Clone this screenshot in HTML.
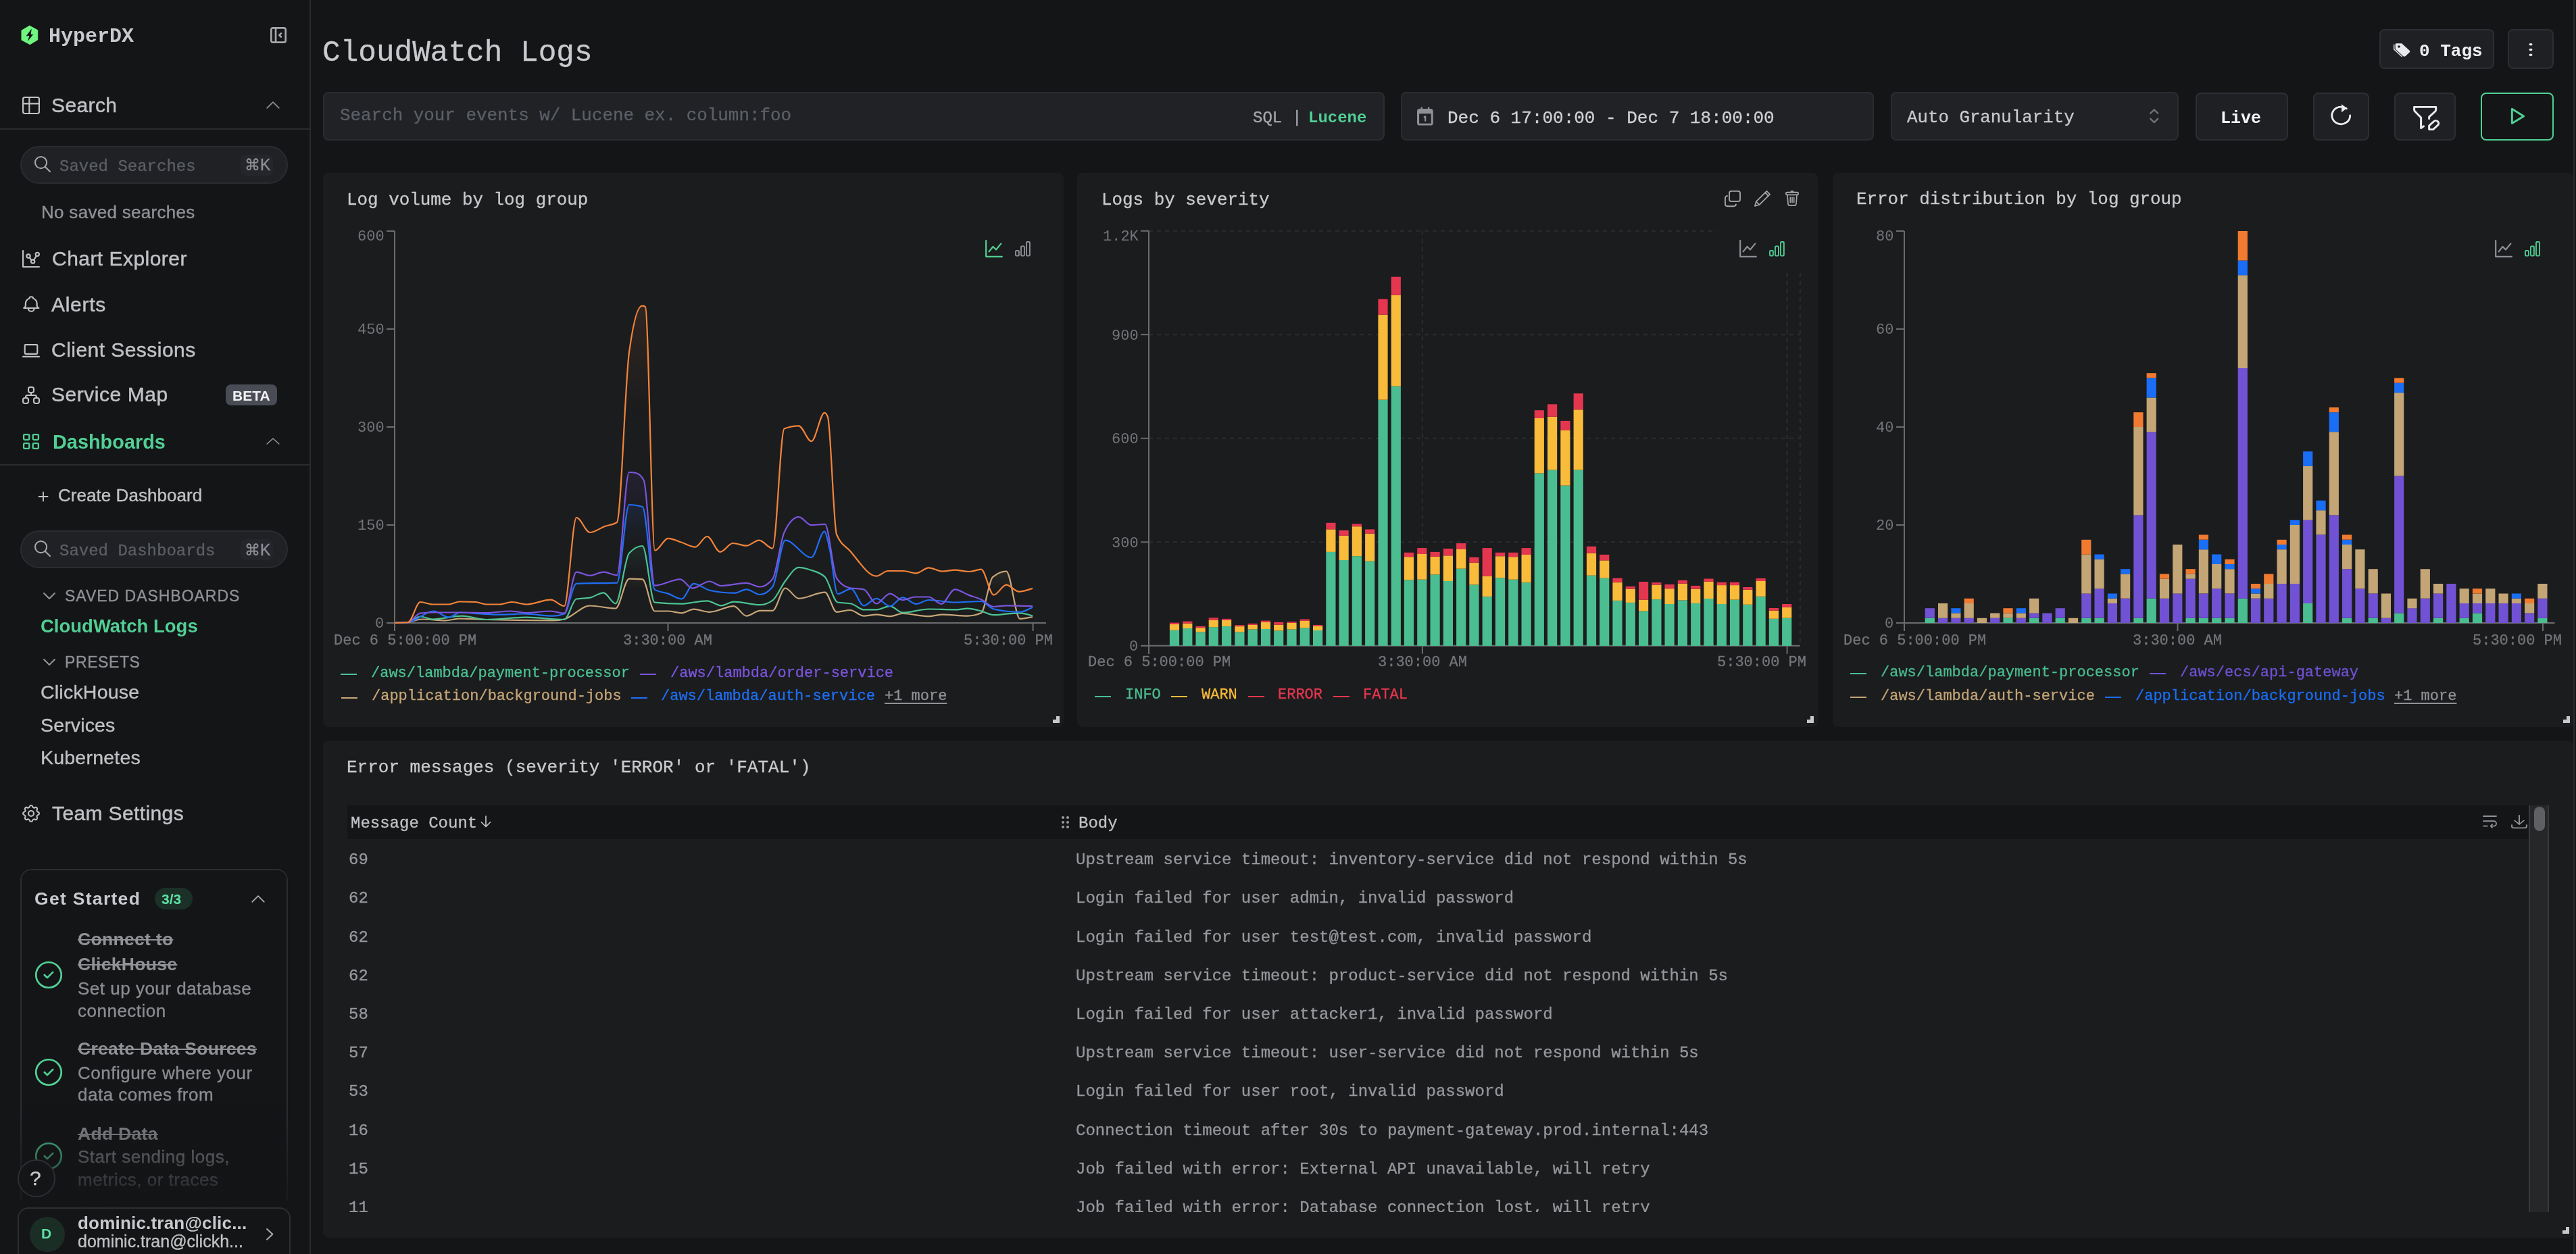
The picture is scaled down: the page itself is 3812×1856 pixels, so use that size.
<!DOCTYPE html>
<html><head><meta charset="utf-8"><style>
html,body{margin:0;padding:0;}
body{width:3812px;height:1856px;overflow:hidden;position:relative;background:#141517;}
.t{position:absolute;white-space:pre;will-change:transform;}
.i{position:absolute;overflow:visible;}
.b{position:absolute;}
@media (max-width: 2600px) { body{zoom:0.5;} }
</style></head><body>
<div class="b" style="left:458.0px;top:0.0px;width:2.0px;height:1856.0px;background:#2a2b2f;border-radius:0px;"></div>
<svg class="i" style="left:30px;top:36px;width:28px;height:32px" viewBox="30 36 28 32"><path d="M43.7,37.9 L55.9,44.6 L55.9,58.9 L44.4,65.9 L31.8,59.3 L31.8,45.1 Z" fill="#70f580" stroke="#70f580" stroke-width="0.6" stroke-linejoin="round"/><path d="M46.8,42.5 L38.6,53.6 L43.4,53.1 L41.0,61.2 L49.1,50.9 L45.6,50.8 Z" fill="#141517"/></svg>
<div class="t" style="left:72.2px;top:39.2px;font-size:30px;line-height:30px;font-family:'Liberation Mono', monospace;color:#c9cacd;font-weight:700;">HyperDX</div>
<svg class="i" style="left:400.0px;top:40.0px;width:24.0px;height:24.0px;color:#a6a7ab;" viewBox="3 3 18 18" preserveAspectRatio="none" fill="none" stroke="currentColor" stroke-width="2" stroke-linecap="round" stroke-linejoin="round"><rect x="4" y="4" width="16" height="16" rx="2"/><path d="M9 4v16"/><path d="M15 10l-2 2 2 2"/></svg>
<svg class="i" style="left:33.0px;top:143.0px;width:26.0px;height:26.0px;color:#c1c2c5;" viewBox="2.2 2.2 19.6 19.6" preserveAspectRatio="none" fill="none" stroke="currentColor" stroke-width="1.6" stroke-linecap="round" stroke-linejoin="round"><rect x="3" y="3" width="18" height="18" rx="2"/><path d="M3 10h18"/><path d="M10 3v18"/></svg>
<div class="t" style="left:75.9px;top:140.5px;font-size:30px;line-height:30px;font-family:'Liberation Sans', sans-serif;color:#c1c2c5;font-weight:400;letter-spacing:0.4px;-webkit-text-stroke:0.45px #c1c2c5">Search</div>
<svg class="i" style="left:394.0px;top:150.0px;width:20.0px;height:11.0px;color:#909296;" viewBox="5.2 8.2 13.6 7.6" preserveAspectRatio="none" fill="none" stroke="currentColor" stroke-width="1.1" stroke-linecap="round" stroke-linejoin="round"><path d="M6 15l6-6 6 6"/></svg>
<div class="b" style="left:0.0px;top:190.0px;width:458.0px;height:2.0px;background:#2a2b2f;border-radius:0px;"></div>
<div class="b" style="left:30.0px;top:216.0px;width:396.0px;height:56.0px;background:#202125;border:2px solid #2a2c31;box-sizing:border-box;border-radius:28px;"></div>
<svg class="i" style="left:51.0px;top:231.0px;width:24.0px;height:24.0px;color:#a6a7ab;" viewBox="2.2 2.2 19.6 19.6" preserveAspectRatio="none" fill="none" stroke="currentColor" stroke-width="1.7" stroke-linecap="round" stroke-linejoin="round"><circle cx="10" cy="10" r="7"/><path d="M21 21l-6-6"/></svg>
<div class="t" style="left:87.6px;top:234.8px;font-size:24px;line-height:24px;font-family:'Liberation Mono', monospace;color:#5c5f66;font-weight:400;;-webkit-text-stroke:0.3px #5c5f66">Saved Searches</div>
<div class="b" style="left:356.0px;top:229.0px;width:48.0px;height:31.0px;background:#25262b;border-radius:8px;"></div>
<div class="t" style="left:362.4px;top:233.4px;font-size:23px;line-height:23px;font-family:'Liberation Sans', sans-serif;color:#8e9096;font-weight:400;;-webkit-text-stroke:0.35px #8e9096">&#8984;K</div>
<div class="t" style="left:60.7px;top:300.9px;font-size:26px;line-height:26px;font-family:'Liberation Sans', sans-serif;color:#909296;font-weight:400;letter-spacing:0.3px;-webkit-text-stroke:0.35px #909296">No saved searches</div>
<svg class="i" style="left:33.0px;top:370.0px;width:26.0px;height:26.0px;color:#c1c2c5;" viewBox="2.2 2.2 19.6 19.6" preserveAspectRatio="none" fill="none" stroke="currentColor" stroke-width="1.6" stroke-linecap="round" stroke-linejoin="round"><path d="M3 3v18h18"/><circle cx="9" cy="9" r="2"/><circle cx="19" cy="7" r="2"/><circle cx="14" cy="15" r="2"/><path d="M10.16 10.62l2.34 2.88"/><path d="M15.088 13.328l2.837-4.586"/></svg>
<div class="t" style="left:76.5px;top:367.5px;font-size:30px;line-height:30px;font-family:'Liberation Sans', sans-serif;color:#c1c2c5;font-weight:400;letter-spacing:0.46px;-webkit-text-stroke:0.45px #c1c2c5">Chart Explorer</div>
<svg class="i" style="left:33.5px;top:437.0px;width:24.5px;height:26.0px;color:#c1c2c5;" viewBox="3.2 1.2 17.6 21.6" preserveAspectRatio="none" fill="none" stroke="currentColor" stroke-width="1.6" stroke-linecap="round" stroke-linejoin="round"><path d="M10 5a2 2 0 1 1 4 0a7 7 0 0 1 4 6v3a4 4 0 0 0 2 3h-16a4 4 0 0 0 2-3v-3a7 7 0 0 1 4-6"/><path d="M9 17v1a3 3 0 0 0 6 0v-1"/></svg>
<div class="t" style="left:75.9px;top:435.5px;font-size:30px;line-height:30px;font-family:'Liberation Sans', sans-serif;color:#c1c2c5;font-weight:400;letter-spacing:0.7px;-webkit-text-stroke:0.45px #c1c2c5">Alerts</div>
<svg class="i" style="left:33.0px;top:509.0px;width:26.0px;height:20.0px;color:#c1c2c5;" viewBox="2.2 5.2 19.6 14.6" preserveAspectRatio="none" fill="none" stroke="currentColor" stroke-width="1.6" stroke-linecap="round" stroke-linejoin="round"><path d="M3 19h18"/><rect x="5" y="6" width="14" height="10" rx="1"/></svg>
<div class="t" style="left:75.9px;top:502.5px;font-size:30px;line-height:30px;font-family:'Liberation Sans', sans-serif;color:#c1c2c5;font-weight:400;letter-spacing:0.46px;-webkit-text-stroke:0.45px #c1c2c5">Client Sessions</div>
<svg class="i" style="left:33.0px;top:572.0px;width:26.0px;height:26.0px;color:#c1c2c5;" viewBox="2.2 2.2 19.6 19.6" preserveAspectRatio="none" fill="none" stroke="currentColor" stroke-width="1.6" stroke-linecap="round" stroke-linejoin="round"><rect x="3" y="15" width="6" height="6" rx="2"/><rect x="15" y="15" width="6" height="6" rx="2"/><rect x="9" y="3" width="6" height="6" rx="2"/><path d="M6 15v-1a2 2 0 0 1 2-2h8a2 2 0 0 1 2 2v1"/><path d="M12 9v3"/></svg>
<div class="t" style="left:75.9px;top:568.5px;font-size:30px;line-height:30px;font-family:'Liberation Sans', sans-serif;color:#c1c2c5;font-weight:400;letter-spacing:0.54px;-webkit-text-stroke:0.45px #c1c2c5">Service Map</div>
<div class="b" style="left:334.0px;top:569.0px;width:76.0px;height:31.0px;background:#4a4c55;border-radius:8px;"></div>
<div class="t" style="left:343.5px;top:575.1px;font-size:21px;line-height:21px;font-family:'Liberation Sans', sans-serif;color:#f1f1f3;font-weight:700;">BETA</div>
<svg class="i" style="left:34.0px;top:642.0px;width:24.0px;height:23.0px;color:#51cf94;" viewBox="3.2 3.2 17.6 17.6" preserveAspectRatio="none" fill="none" stroke="currentColor" stroke-width="1.7" stroke-linecap="round" stroke-linejoin="round"><rect x="4" y="4" width="6" height="6" rx="1"/><rect x="14" y="4" width="6" height="6" rx="1"/><rect x="4" y="14" width="6" height="6" rx="1"/><rect x="14" y="14" width="6" height="6" rx="1"/></svg>
<div class="t" style="left:77.5px;top:639.7px;font-size:28.8px;line-height:28.8px;font-family:'Liberation Sans', sans-serif;color:#51cf94;font-weight:700;letter-spacing:0.05px">Dashboards</div>
<svg class="i" style="left:394.0px;top:648.0px;width:20.0px;height:10.0px;color:#909296;" viewBox="5.2 8.2 13.6 7.6" preserveAspectRatio="none" fill="none" stroke="currentColor" stroke-width="1.1" stroke-linecap="round" stroke-linejoin="round"><path d="M6 15l6-6 6 6"/></svg>
<div class="b" style="left:0.0px;top:687.0px;width:458.0px;height:2.0px;background:#2a2b2f;border-radius:0px;"></div>
<svg class="i" style="left:57.0px;top:728.0px;width:14.0px;height:14.0px;color:#c1c2c5;" viewBox="4.5 4.5 15 15" preserveAspectRatio="none" fill="none" stroke="currentColor" stroke-width="2" stroke-linecap="round" stroke-linejoin="round"><path d="M12 5v14M5 12h14"/></svg>
<div class="t" style="left:86.2px;top:719.9px;font-size:26px;line-height:26px;font-family:'Liberation Sans', sans-serif;color:#c1c2c5;font-weight:400;letter-spacing:0.05px;-webkit-text-stroke:0.35px #c1c2c5">Create Dashboard</div>
<div class="b" style="left:30.0px;top:785.0px;width:396.0px;height:56.0px;background:#202125;border:2px solid #2a2c31;box-sizing:border-box;border-radius:28px;"></div>
<svg class="i" style="left:51.0px;top:800.0px;width:24.0px;height:24.0px;color:#a6a7ab;" viewBox="2.2 2.2 19.6 19.6" preserveAspectRatio="none" fill="none" stroke="currentColor" stroke-width="1.7" stroke-linecap="round" stroke-linejoin="round"><circle cx="10" cy="10" r="7"/><path d="M21 21l-6-6"/></svg>
<div class="t" style="left:87.6px;top:803.8px;font-size:24px;line-height:24px;font-family:'Liberation Mono', monospace;color:#5c5f66;font-weight:400;;-webkit-text-stroke:0.3px #5c5f66">Saved Dashboards</div>
<div class="b" style="left:356.0px;top:798.0px;width:48.0px;height:31.0px;background:#25262b;border-radius:8px;"></div>
<div class="t" style="left:362.4px;top:802.5px;font-size:23px;line-height:23px;font-family:'Liberation Sans', sans-serif;color:#8e9096;font-weight:400;;-webkit-text-stroke:0.35px #8e9096">&#8984;K</div>
<svg class="i" style="left:64.0px;top:877.0px;width:18.0px;height:10.0px;color:#909296;" viewBox="5.2 8.2 13.6 7.6" preserveAspectRatio="none" fill="none" stroke="currentColor" stroke-width="1.6" stroke-linecap="round" stroke-linejoin="round"><path d="M6 9l6 6 6-6"/></svg>
<div class="t" style="left:96.4px;top:870.5px;font-size:23px;line-height:23px;font-family:'Liberation Sans', sans-serif;color:#909296;font-weight:400;letter-spacing:0.98px;-webkit-text-stroke:0.35px #909296">SAVED DASHBOARDS</div>
<div class="t" style="left:60.1px;top:912.6px;font-size:27.5px;line-height:27.5px;font-family:'Liberation Sans', sans-serif;color:#51cf94;font-weight:700;">CloudWatch Logs</div>
<svg class="i" style="left:64.0px;top:975.0px;width:18.0px;height:10.0px;color:#909296;" viewBox="5.2 8.2 13.6 7.6" preserveAspectRatio="none" fill="none" stroke="currentColor" stroke-width="1.6" stroke-linecap="round" stroke-linejoin="round"><path d="M6 9l6 6 6-6"/></svg>
<div class="t" style="left:96.4px;top:968.5px;font-size:23px;line-height:23px;font-family:'Liberation Sans', sans-serif;color:#909296;font-weight:400;letter-spacing:0.6px;-webkit-text-stroke:0.35px #909296">PRESETS</div>
<div class="t" style="left:60.0px;top:1010.3px;font-size:28.5px;line-height:28.5px;font-family:'Liberation Sans', sans-serif;color:#c1c2c5;font-weight:400;letter-spacing:0.22px;-webkit-text-stroke:0.35px #c1c2c5">ClickHouse</div>
<div class="t" style="left:60.0px;top:1058.8px;font-size:28.5px;line-height:28.5px;font-family:'Liberation Sans', sans-serif;color:#c1c2c5;font-weight:400;letter-spacing:0.15px;-webkit-text-stroke:0.35px #c1c2c5">Services</div>
<div class="t" style="left:60.0px;top:1107.2px;font-size:28.5px;line-height:28.5px;font-family:'Liberation Sans', sans-serif;color:#c1c2c5;font-weight:400;letter-spacing:0.22px;-webkit-text-stroke:0.35px #c1c2c5">Kubernetes</div>
<svg class="i" style="left:33.0px;top:1191.0px;width:26.0px;height:26.0px;color:#c1c2c5;" viewBox="2.2 2.2 19.6 19.6" preserveAspectRatio="none" fill="none" stroke="currentColor" stroke-width="1.6" stroke-linecap="round" stroke-linejoin="round"><path d="M10.325 4.317c.426-1.756 2.924-1.756 3.35 0a1.724 1.724 0 0 0 2.573 1.066c1.543-.94 3.31.826 2.37 2.37a1.724 1.724 0 0 0 1.065 2.572c1.756.426 1.756 2.924 0 3.35a1.724 1.724 0 0 0-1.066 2.573c.94 1.543-.826 3.31-2.37 2.37a1.724 1.724 0 0 0-2.572 1.065c-.426 1.756-2.924 1.756-3.35 0a1.724 1.724 0 0 0-2.573-1.066c-1.543.94-3.31-.826-2.37-2.37a1.724 1.724 0 0 0-1.065-2.572c-1.756-.426-1.756-2.924 0-3.35a1.724 1.724 0 0 0 1.066-2.573c-.94-1.543.826-3.31 2.37-2.37c1 .608 2.296.07 2.572-1.065z"/><circle cx="12" cy="12" r="3"/></svg>
<div class="t" style="left:76.5px;top:1188.9px;font-size:30px;line-height:30px;font-family:'Liberation Sans', sans-serif;color:#c1c2c5;font-weight:400;letter-spacing:0.38px;-webkit-text-stroke:0.45px #c1c2c5">Team Settings</div>
<div class="b" style="left:30px;top:1286px;width:396px;height:492px;border:2px solid #2a2c31;border-bottom:none;border-radius:16px 16px 0 0;box-sizing:border-box;-webkit-mask-image:linear-gradient(to bottom,#000 0%,#000 75%,rgba(0,0,0,0.25) 100%)"></div>
<div class="t" style="left:50.7px;top:1316.5px;font-size:26.5px;line-height:26.5px;font-family:'Liberation Sans', sans-serif;color:#c9cacd;font-weight:700;letter-spacing:1.3px">Get Started</div>
<div class="b" style="left:228.5px;top:1314.0px;width:56.2px;height:32.0px;background:#1b3128;border-radius:16px;"></div>
<div class="t" style="left:238.5px;top:1320.2px;font-size:21px;line-height:21px;font-family:'Liberation Sans', sans-serif;color:#5ee0a4;font-weight:700;">3/3</div>
<svg class="i" style="left:372.0px;top:1325.0px;width:20.0px;height:11.0px;color:#b0b1b5;" viewBox="5.2 8.2 13.6 7.6" preserveAspectRatio="none" fill="none" stroke="currentColor" stroke-width="1.1" stroke-linecap="round" stroke-linejoin="round"><path d="M6 15l6-6 6 6"/></svg>
<svg class="i" style="left:52.0px;top:1423.0px;width:40.0px;height:40.0px;color:#52d197;" viewBox="2.4 2.4 19.2 19.2" preserveAspectRatio="none" fill="none" stroke="currentColor" stroke-width="1.3" stroke-linecap="round" stroke-linejoin="round"><circle cx="12" cy="12" r="9"/><path d="M9 12l2 2 4-4"/></svg>
<div class="t" style="left:114.6px;top:1377.1px;font-size:26.5px;line-height:26.5px;font-family:'Liberation Sans', sans-serif;color:#909296;font-weight:700;text-decoration:line-through;text-decoration-thickness:2px;letter-spacing:0.3px">Connect to</div>
<div class="t" style="left:114.6px;top:1414.2px;font-size:26.5px;line-height:26.5px;font-family:'Liberation Sans', sans-serif;color:#909296;font-weight:700;text-decoration:line-through;text-decoration-thickness:2px;letter-spacing:0.3px">ClickHouse</div>
<div class="t" style="left:114.7px;top:1449.9px;font-size:26px;line-height:26px;font-family:'Liberation Sans', sans-serif;color:#8a8c91;font-weight:400;letter-spacing:0.5px;-webkit-text-stroke:0.35px #8a8c91">Set up your database</div>
<div class="t" style="left:114.7px;top:1482.9px;font-size:26px;line-height:26px;font-family:'Liberation Sans', sans-serif;color:#8a8c91;font-weight:400;letter-spacing:0.5px;-webkit-text-stroke:0.35px #8a8c91">connection</div>
<svg class="i" style="left:52.0px;top:1567.0px;width:40.0px;height:40.0px;color:#52d197;" viewBox="2.4 2.4 19.2 19.2" preserveAspectRatio="none" fill="none" stroke="currentColor" stroke-width="1.3" stroke-linecap="round" stroke-linejoin="round"><circle cx="12" cy="12" r="9"/><path d="M9 12l2 2 4-4"/></svg>
<div class="t" style="left:114.6px;top:1538.5px;font-size:26.5px;line-height:26.5px;font-family:'Liberation Sans', sans-serif;color:#909296;font-weight:700;text-decoration:line-through;text-decoration-thickness:2px;letter-spacing:0.3px">Create Data Sources</div>
<div class="t" style="left:114.7px;top:1574.9px;font-size:26px;line-height:26px;font-family:'Liberation Sans', sans-serif;color:#8a8c91;font-weight:400;letter-spacing:0.5px;-webkit-text-stroke:0.35px #8a8c91">Configure where your</div>
<div class="t" style="left:114.7px;top:1607.3px;font-size:26px;line-height:26px;font-family:'Liberation Sans', sans-serif;color:#8a8c91;font-weight:400;letter-spacing:0.5px;-webkit-text-stroke:0.35px #8a8c91">data comes from</div>
<svg class="i" style="left:52.0px;top:1691.0px;width:40.0px;height:40.0px;color:#52d197;" viewBox="2.4 2.4 19.2 19.2" preserveAspectRatio="none" fill="none" stroke="currentColor" stroke-width="1.3" stroke-linecap="round" stroke-linejoin="round"><circle cx="12" cy="12" r="9"/><path d="M9 12l2 2 4-4"/></svg>
<div class="t" style="left:114.6px;top:1664.5px;font-size:26.5px;line-height:26.5px;font-family:'Liberation Sans', sans-serif;color:#909296;font-weight:700;text-decoration:line-through;text-decoration-thickness:2px;letter-spacing:0.3px">Add Data</div>
<div class="t" style="left:114.7px;top:1699.4px;font-size:26px;line-height:26px;font-family:'Liberation Sans', sans-serif;color:#8a8c91;font-weight:400;letter-spacing:0.5px;-webkit-text-stroke:0.35px #8a8c91">Start sending logs,</div>
<div class="t" style="left:114.7px;top:1732.5px;font-size:26px;line-height:26px;font-family:'Liberation Sans', sans-serif;color:#8a8c91;font-weight:400;letter-spacing:0.5px;-webkit-text-stroke:0.35px #8a8c91">metrics, or traces</div>
<div class="b" style="left:32px;top:1640px;width:392px;height:150px;background:linear-gradient(to bottom, rgba(20,21,23,0) 0%, rgba(20,21,23,0.55) 55%, rgba(20,21,23,1) 100%)"></div>
<div class="b" style="left:26px;top:1716px;width:56px;height:56px;border-radius:50%;background:#141517;border:2px solid #2c2e33;box-sizing:border-box"></div>
<div class="t" style="left:44.4px;top:1728.5px;font-size:30px;line-height:30px;font-family:'Liberation Sans', sans-serif;color:#c9cacd;font-weight:400;;-webkit-text-stroke:0.35px #c9cacd">?</div>
<div class="b" style="left:26px;top:1787px;width:404px;height:120px;border:2px solid #2c2e33;border-radius:16px;box-sizing:border-box;background:#141517"></div>
<div class="b" style="left:44px;top:1801px;width:52px;height:52px;border-radius:50%;background:#1a2e26"></div>
<div class="t" style="left:61.0px;top:1815.2px;font-size:21px;line-height:21px;font-family:'Liberation Sans', sans-serif;color:#5ee0a4;font-weight:700;">D</div>
<div class="t" style="left:114.7px;top:1796.6px;font-size:26px;line-height:26px;font-family:'Liberation Sans', sans-serif;color:#c9cacd;font-weight:700;letter-spacing:0.2px">dominic.tran@clic...</div>
<div class="t" style="left:114.8px;top:1824.8px;font-size:25px;line-height:25px;font-family:'Liberation Sans', sans-serif;color:#c1c2c5;font-weight:400;;-webkit-text-stroke:0.35px #c1c2c5">dominic.tran@clickh...</div>
<svg class="i" style="left:393.5px;top:1817.5px;width:10.5px;height:17.5px;color:#a6a7ab;" viewBox="8.2 5.2 7.6 13.6" preserveAspectRatio="none" fill="none" stroke="currentColor" stroke-width="1.5" stroke-linecap="round" stroke-linejoin="round"><path d="M9 6l6 6-6 6"/></svg>
<div class="t" style="left:476.8px;top:56.3px;font-size:44.4px;line-height:44.4px;font-family:'Liberation Mono', monospace;color:#c9cacd;font-weight:400;;-webkit-text-stroke:0.3px #c9cacd">CloudWatch Logs</div>
<div class="b" style="left:3520.8px;top:43.2px;width:169.8px;height:59.2px;background:#1f2024;border:2px solid #2c2e33;box-sizing:border-box;border-radius:8px;"></div>
<svg class="i" style="left:3542.5px;top:62.5px;width:23.0px;height:21.2px;color:#e9e9ec;" viewBox="2.5 2.5 18 18" preserveAspectRatio="none" fill="none" stroke="currentColor" stroke-width="1.4" stroke-linecap="round" stroke-linejoin="round"><path fill="currentColor" stroke="none" d="M5 3.5h6.2l8.8 8.8a2 2 0 0 1 0 2.8l-4.4 4.4a2 2 0 0 1-2.8 0L4.2 10.9a2 2 0 0 1-.4-1.2V4.7a1.2 1.2 0 0 1 1.2-1.2z"/><circle cx="8" cy="7.6" r="1.5" fill="#202226" stroke="none"/><path d="M2.3 5.2v5.8l8.9 8.9" stroke-width="1.1"/></svg>
<div class="t" style="left:3580.4px;top:62.7px;font-size:26px;line-height:26px;font-family:'Liberation Mono', monospace;color:#f0f0f2;font-weight:700;">0 Tags</div>
<div class="b" style="left:3711.0px;top:43.2px;width:67.8px;height:59.2px;background:#1f2024;border:2px solid #2c2e33;box-sizing:border-box;border-radius:8px;"></div>
<svg class="i" style="left:3741.0px;top:63.0px;width:8.0px;height:21.0px;color:#e9e9ec;" viewBox="9.5 2.5 5 19" preserveAspectRatio="none" fill="none" stroke="currentColor" stroke-width="0" stroke-linecap="round" stroke-linejoin="round"><circle cx="12" cy="5" r="1.6" fill="currentColor"/><circle cx="12" cy="12" r="1.6" fill="currentColor"/><circle cx="12" cy="19" r="1.6" fill="currentColor"/></svg>
<div class="b" style="left:478.0px;top:136.0px;width:1571.0px;height:72.0px;background:#202226;border:2px solid #2a2c31;box-sizing:border-box;border-radius:8px;"></div>
<div class="t" style="left:502.9px;top:159.3px;font-size:25.9px;line-height:25.9px;font-family:'Liberation Mono', monospace;color:#5c5f66;font-weight:400;;-webkit-text-stroke:0.3px #5c5f66">Search your events w/ Lucene ex. column:foo</div>
<div class="t" style="left:1853.6px;top:162.8px;font-size:24px;line-height:24px;font-family:'Liberation Mono', monospace;color:#a6a7ab;font-weight:400;;-webkit-text-stroke:0.3px #a6a7ab">SQL</div>
<div class="t" style="left:1911.6px;top:162.8px;font-size:24px;line-height:24px;font-family:'Liberation Mono', monospace;color:#a6a7ab;font-weight:400;;-webkit-text-stroke:0.3px #a6a7ab">|</div>
<div class="t" style="left:1936.1px;top:162.8px;font-size:24px;line-height:24px;font-family:'Liberation Mono', monospace;color:#51cf94;font-weight:700;">Lucene</div>
<div class="b" style="left:2073.0px;top:136.0px;width:700.0px;height:72.0px;background:#202226;border:2px solid #2a2c31;box-sizing:border-box;border-radius:8px;"></div>
<svg class="i" style="left:2097.0px;top:158.8px;width:23.8px;height:26.8px;color:#8e9096;" viewBox="4 3 16 18" preserveAspectRatio="none" fill="none" stroke="currentColor" stroke-width="1.8" stroke-linecap="round" stroke-linejoin="round"><rect x="4" y="4.4" width="16" height="16.4" rx="2.6" fill="currentColor" stroke="none"/><rect x="6.1" y="9.2" width="11.9" height="9.8" rx="0.6" fill="#202226" stroke="none"/><path d="M8.5 3.6v1.4M15.5 3.6v1.4" stroke-width="1.8"/><path d="M11.2 12.6l1-.6v4.2" stroke-width="1.5"/></svg>
<div class="t" style="left:2142.2px;top:162.2px;font-size:26px;line-height:26px;font-family:'Liberation Mono', monospace;color:#d0d1d4;font-weight:400;;-webkit-text-stroke:0.3px #d0d1d4">Dec 6 17:00:00 - Dec 7 18:00:00</div>
<div class="b" style="left:2797.5px;top:136.0px;width:426.2px;height:72.0px;background:#202226;border:2px solid #2a2c31;box-sizing:border-box;border-radius:8px;"></div>
<div class="t" style="left:2821.5px;top:162.1px;font-size:25.8px;line-height:25.8px;font-family:'Liberation Mono', monospace;color:#c9cacd;font-weight:400;;-webkit-text-stroke:0.3px #c9cacd">Auto Granularity</div>
<svg class="i" style="left:3181.0px;top:161.0px;width:13.5px;height:21.5px;color:#6f7177;" viewBox="7 4 10 16" preserveAspectRatio="none" fill="none" stroke="currentColor" stroke-width="1.8" stroke-linecap="round" stroke-linejoin="round"><path d="M8 9l4-4 4 4"/><path d="M16 15l-4 4-4-4"/></svg>
<div class="b" style="left:3248.8px;top:136.8px;width:137.0px;height:71.2px;background:#1f2024;border:2px solid #2c2e33;box-sizing:border-box;border-radius:8px;"></div>
<div class="t" style="left:3286.0px;top:162.8px;font-size:25px;line-height:25px;font-family:'Liberation Mono', monospace;color:#f5f5f7;font-weight:700;">Live</div>
<div class="b" style="left:3422.5px;top:136.8px;width:83.8px;height:71.2px;background:#1f2024;border:2px solid #2c2e33;box-sizing:border-box;border-radius:8px;"></div>
<svg class="i" style="left:3449.0px;top:152.5px;width:30.5px;height:35.0px;color:#ededf0;" viewBox="3.5 1.5 17 20.5" preserveAspectRatio="none" fill="none" stroke="currentColor" stroke-width="1.6" stroke-linecap="round" stroke-linejoin="round"><path d="M19.5 12a7.5 7.5 0 1 1-3-6"/><path d="M12.5 2.2l4.2 3.6-4.2 3.4" fill="currentColor" stroke="none"/></svg>
<div class="b" style="left:3543.0px;top:136.8px;width:91.2px;height:71.2px;background:#1f2024;border:2px solid #2c2e33;box-sizing:border-box;border-radius:8px;"></div>
<svg class="i" style="left:3571.0px;top:155.0px;width:38.5px;height:38.0px;color:#ededf0;" viewBox="3.2 2.2 19.2 20.6" preserveAspectRatio="none" fill="none" stroke="currentColor" stroke-width="1.5" stroke-linecap="round" stroke-linejoin="round"><path d="M10.97 19.44l-1.97 1.56v-8.5l-4.48-4.928a2 2 0 0 1-.52-1.345v-2.227h16v2.172a2 2 0 0 1-.586 1.414l-4.414 4.414v1.5"/><path d="M18.42 15.61a2.1 2.1 0 0 1 2.97 2.97l-3.39 3.42h-3v-3l3.42-3.39z"/></svg>
<div class="b" style="left:3671.2px;top:136.8px;width:107.5px;height:71.2px;background:transparent;border:2px solid #4fcf95;box-sizing:border-box;border-radius:8px;"></div>
<svg class="i" style="left:3716.0px;top:160.0px;width:20.0px;height:23.8px;color:#4fcf95;" viewBox="6 3 15 18" preserveAspectRatio="none" fill="none" stroke="currentColor" stroke-width="2.2" stroke-linecap="round" stroke-linejoin="round"><path d="M7 4v16l13-8z"/></svg>
<div class="b" style="left:478.0px;top:256.0px;width:1096.0px;height:820.0px;background:#1b1c1e;border-radius:8px;"></div>
<div class="b" style="left:1594.0px;top:256.0px;width:1096.0px;height:820.0px;background:#1b1c1e;border-radius:8px;"></div>
<div class="b" style="left:2712.0px;top:256.0px;width:1096.0px;height:820.0px;background:#1b1c1e;border-radius:8px;"></div>
<div class="b" style="left:478.0px;top:1096.0px;width:3330.0px;height:736.0px;background:#1b1c1e;border-radius:8px;"></div>
<div class="b" style="left:3808.0px;top:0.0px;width:2.0px;height:1856.0px;background:#2a2b2e;border-radius:0px;"></div>
<div class="t" style="left:513.4px;top:284.3px;font-size:25.9px;line-height:25.9px;font-family:'Liberation Mono', monospace;color:#c9cacd;font-weight:400;;-webkit-text-stroke:0.3px #c9cacd">Log volume by log group</div>
<svg class="i" style="left:0;top:0;width:3812px;height:1856px" viewBox="0 0 3812 1856">
<path d="M584,342 V934" stroke="#6c6c6e" stroke-width="2"/>
<path d="M584,922 H1548" stroke="#6c6c6e" stroke-width="2"/>
<path d="M572,342 H584" stroke="#6c6c6e" stroke-width="2"/>
<path d="M572,487 H584" stroke="#6c6c6e" stroke-width="2"/>
<path d="M572,632 H584" stroke="#6c6c6e" stroke-width="2"/>
<path d="M572,777 H584" stroke="#6c6c6e" stroke-width="2"/>
<path d="M572,922 H584" stroke="#6c6c6e" stroke-width="2"/>
<path d="M584,922 V934" stroke="#6c6c6e" stroke-width="2"/>
<path d="M988.5,922 V934" stroke="#6c6c6e" stroke-width="2"/>
<path d="M1528.6,922 V934" stroke="#6c6c6e" stroke-width="2"/>
</svg>
<div class="t" style="left:528.9px;top:340.3px;width:39.6px;text-align:right;font-size:22px;line-height:22px;font-family:'Liberation Mono', monospace;color:#747579">600</div>
<div class="t" style="left:528.9px;top:478.3px;width:39.6px;text-align:right;font-size:22px;line-height:22px;font-family:'Liberation Mono', monospace;color:#747579">450</div>
<div class="t" style="left:528.9px;top:623.3px;width:39.6px;text-align:right;font-size:22px;line-height:22px;font-family:'Liberation Mono', monospace;color:#747579">300</div>
<div class="t" style="left:528.9px;top:768.3px;width:39.6px;text-align:right;font-size:22px;line-height:22px;font-family:'Liberation Mono', monospace;color:#747579">150</div>
<div class="t" style="left:555.3px;top:913.3px;width:13.2px;text-align:right;font-size:22px;line-height:22px;font-family:'Liberation Mono', monospace;color:#747579">0</div>
<div class="t" style="left:494.2px;top:937.7px;font-size:22px;line-height:22px;font-family:'Liberation Mono', monospace;color:#747579;font-weight:400;;-webkit-text-stroke:0.3px #747579">Dec 6 5:00:00 PM</div>
<div class="t" style="left:922.2px;top:937.7px;font-size:22px;line-height:22px;font-family:'Liberation Mono', monospace;color:#747579;font-weight:400;;-webkit-text-stroke:0.3px #747579">3:30:00 AM</div>
<div class="t" style="left:1426.3px;top:937.7px;font-size:22px;line-height:22px;font-family:'Liberation Mono', monospace;color:#747579;font-weight:400;;-webkit-text-stroke:0.3px #747579">5:30:00 PM</div>
<svg class="i" style="left:1458.0px;top:355.0px;width:26.0px;height:26.0px;color:#51cf94;" viewBox="3.2 3.2 17.6 17.6" preserveAspectRatio="none" fill="none" stroke="currentColor" stroke-width="1.5" stroke-linecap="round" stroke-linejoin="round"><path d="M4 4v16h16"/><path d="M7 15l4-5 3 3 5-6"/></svg>
<svg class="i" style="left:1501.5px;top:356.6px;width:22.9px;height:22.7px;color:#8e9096;" viewBox="2.2 3.2 18.6 17.6" preserveAspectRatio="none" fill="none" stroke="currentColor" stroke-width="1.5" stroke-linecap="round" stroke-linejoin="round"><rect x="3" y="14" width="4" height="6" rx="1"/><rect x="9.5" y="9" width="4" height="11" rx="1"/><rect x="16" y="4" width="4" height="16" rx="1"/></svg>
<svg class="i" style="left:0;top:0;width:3812px;height:1856px" viewBox="0 0 3812 1856">
<defs>
<linearGradient id="g_tan" x1="0" y1="0" x2="0" y2="1"><stop offset="0%" stop-color="#c7a677" stop-opacity="0.10"/><stop offset="35%" stop-color="#c7a677" stop-opacity="0"/></linearGradient>
<linearGradient id="g_green" x1="0" y1="0" x2="0" y2="1"><stop offset="0%" stop-color="#4cc393" stop-opacity="0.10"/><stop offset="35%" stop-color="#4cc393" stop-opacity="0"/></linearGradient>
<linearGradient id="g_blue" x1="0" y1="0" x2="0" y2="1"><stop offset="0%" stop-color="#1f6ff5" stop-opacity="0.10"/><stop offset="35%" stop-color="#1f6ff5" stop-opacity="0"/></linearGradient>
<linearGradient id="g_purple" x1="0" y1="0" x2="0" y2="1"><stop offset="0%" stop-color="#7b55dd" stop-opacity="0.10"/><stop offset="35%" stop-color="#7b55dd" stop-opacity="0"/></linearGradient>
<linearGradient id="g_orange" x1="0" y1="0" x2="0" y2="1"><stop offset="0%" stop-color="#f3843a" stop-opacity="0.10"/><stop offset="35%" stop-color="#f3843a" stop-opacity="0"/></linearGradient>
</defs>
<path d="M584.0,922.0 C590.7,921.8 597.3,921.7 604.0,921.0 C610.7,920.3 617.3,916.5 624.0,916.5 C635.9,916.5 647.8,918.4 659.7,918.4 C666.5,918.4 673.2,915.6 680.0,915.6 C693.2,915.6 706.3,916.6 719.5,917.0 C752.7,917.9 785.8,918.4 819.0,918.4 C824.3,918.4 829.7,917.8 835.0,916.5 C847.7,913.5 860.3,896.5 873.0,896.5 C885.7,896.5 898.3,900.5 911.0,900.5 C917.7,900.5 924.3,856.6 931.0,856.6 C937.6,856.6 944.2,856.9 950.8,857.4 C956.8,857.9 962.8,904.5 968.8,904.5 C975.4,904.5 982.1,904.5 988.7,904.5 C995.3,904.5 1002.0,907.3 1008.6,907.3 C1014.6,907.3 1020.6,901.7 1026.6,901.7 C1034.4,901.7 1042.2,905.8 1050.0,905.8 C1062.0,905.8 1073.9,897.2 1085.9,897.2 C1092.1,897.2 1098.3,911.6 1104.5,911.6 C1111.2,911.6 1117.9,903.8 1124.6,903.8 C1130.8,903.8 1137.1,903.8 1143.3,903.8 C1149.5,903.8 1155.8,870.5 1162.0,870.5 C1168.7,870.5 1175.3,885.8 1182.0,885.8 C1194.9,885.8 1207.9,876.6 1220.8,876.6 C1226.5,876.6 1232.3,905.8 1238.0,905.8 C1244.7,905.8 1251.3,903.0 1258.0,903.0 C1264.7,903.0 1271.5,911.6 1278.2,911.6 C1284.4,911.6 1290.7,909.6 1296.9,909.6 C1303.6,909.6 1310.3,912.2 1317.0,912.2 C1323.2,912.2 1329.4,908.0 1335.6,908.0 C1348.5,908.0 1361.5,912.2 1374.4,912.2 C1381.1,912.2 1387.8,909.6 1394.5,909.6 C1406.9,909.6 1419.4,911.6 1431.8,911.6 C1438.5,911.6 1445.2,910.2 1451.9,907.3 C1457.6,904.9 1463.3,859.1 1469.0,854.2 C1475.7,848.5 1482.5,845.6 1489.2,845.6 C1495.9,845.6 1502.6,915.9 1509.3,915.9 C1515.5,915.9 1521.8,914.5 1528.0,913.0 L1528,922 L584,922 Z" fill="url(#g_tan)" stroke="none"/>
<path d="M584.0,922.0 C590.7,921.8 597.3,921.7 604.0,921.0 C610.0,920.4 616.0,912.5 622.0,912.5 C628.0,912.5 634.0,916.5 640.0,916.5 C654.6,916.5 669.1,911.6 683.7,911.6 C695.6,911.6 707.6,917.0 719.5,917.0 C739.3,917.0 759.2,913.6 779.0,913.6 C797.7,913.6 816.3,917.0 835.0,917.0 C841.0,917.0 847.0,887.6 853.0,886.5 C859.7,885.2 866.3,885.9 873.0,884.6 C879.7,883.3 886.3,877.4 893.0,877.4 C899.0,877.4 905.0,893.3 911.0,893.3 C917.7,893.3 924.3,826.1 931.0,818.8 C937.6,811.6 944.2,808.0 950.8,808.0 C956.8,808.0 962.8,891.1 968.8,891.7 C981.4,893.0 994.0,893.7 1006.6,893.7 C1019.9,893.7 1033.2,889.3 1046.5,889.3 C1053.3,889.3 1060.2,896.4 1067.0,896.4 C1073.3,896.4 1079.6,890.6 1085.9,890.6 C1098.8,890.6 1111.7,895.2 1124.6,895.2 C1130.8,895.2 1137.1,893.0 1143.3,888.6 C1149.5,884.2 1155.8,868.0 1162.0,860.0 C1168.7,851.5 1175.3,839.8 1182.0,839.8 C1188.2,839.8 1194.5,841.8 1200.7,844.0 C1207.4,846.4 1214.1,847.3 1220.8,854.0 C1227.0,860.2 1233.3,890.3 1239.5,891.5 C1246.2,892.8 1252.8,892.2 1259.5,893.5 C1265.7,894.7 1272.0,902.4 1278.2,902.4 C1284.4,902.4 1290.7,902.4 1296.9,902.4 C1303.6,902.4 1310.3,897.2 1317.0,897.2 C1323.2,897.2 1329.4,906.7 1335.6,906.7 C1348.5,906.7 1361.5,901.5 1374.4,901.5 C1387.3,901.5 1400.1,902.4 1413.0,902.4 C1419.3,902.4 1425.5,900.7 1431.8,900.7 C1438.5,900.7 1445.2,902.7 1451.9,904.4 C1458.1,906.0 1464.3,910.2 1470.5,910.2 C1476.7,910.2 1483.0,909.2 1489.2,908.7 C1495.9,908.2 1502.6,907.3 1509.3,907.3 C1515.5,907.3 1521.8,909.5 1528.0,911.6 L1528,922 L584,922 Z" fill="url(#g_green)" stroke="none"/>
<path d="M584.0,922.0 C590.7,921.8 597.3,921.7 604.0,921.0 C616.7,919.7 629.3,904.5 642.0,904.5 C649.2,904.5 656.5,913.6 663.7,913.6 C669.7,913.6 675.7,906.5 681.7,906.5 C691.7,906.5 701.6,908.0 711.6,908.5 C720.9,909.0 730.2,909.7 739.5,909.7 C751.5,909.7 763.4,908.5 775.4,908.5 C789.9,908.5 804.5,911.6 819.0,911.6 C824.3,911.6 829.7,910.6 835.0,908.5 C841.0,906.2 847.0,864.0 853.0,863.8 C873.0,863.0 893.0,863.4 913.0,862.6 C919.0,862.4 925.0,747.0 931.0,747.0 C937.6,747.0 944.2,748.0 950.8,750.0 C956.8,751.8 962.8,869.0 968.8,872.6 C975.4,876.6 982.1,876.3 988.7,878.6 C995.3,880.9 1002.0,886.5 1008.6,886.5 C1014.6,886.5 1020.6,863.8 1026.6,863.8 C1034.4,863.8 1042.2,872.0 1050.0,873.7 C1062.4,876.4 1074.9,877.7 1087.3,877.7 C1093.0,877.7 1098.8,872.3 1104.5,872.3 C1111.2,872.3 1117.9,880.0 1124.6,880.0 C1130.8,880.0 1137.1,876.2 1143.3,868.5 C1149.5,860.8 1155.8,799.6 1162.0,799.6 C1174.9,799.6 1187.8,825.0 1200.7,825.0 C1207.1,825.0 1213.6,786.7 1220.0,786.7 C1222.7,786.7 1225.3,802.4 1228.0,814.0 C1231.8,830.6 1235.7,879.0 1239.5,879.0 C1246.2,879.0 1252.8,871.4 1259.5,871.4 C1265.7,871.4 1272.0,896.4 1278.2,896.4 C1284.4,896.4 1290.7,885.8 1296.9,885.8 C1303.6,885.8 1310.3,897.2 1317.0,897.2 C1323.2,897.2 1329.4,884.3 1335.6,884.3 C1342.3,884.3 1349.0,893.8 1355.7,893.8 C1361.9,893.8 1368.2,888.0 1374.4,888.0 C1387.3,888.0 1400.1,891.5 1413.0,891.5 C1426.0,891.5 1438.9,890.0 1451.9,890.0 C1458.1,890.0 1464.3,900.1 1470.5,901.5 C1483.4,904.4 1496.4,905.8 1509.3,905.8 C1515.5,905.8 1521.8,902.2 1528.0,898.7 L1528,922 L584,922 Z" fill="url(#g_blue)" stroke="none"/>
<path d="M584.0,922.0 C590.7,921.8 597.3,921.7 604.0,921.0 C610.0,920.4 616.0,908.5 622.0,907.7 C628.0,906.9 634.0,906.5 640.0,906.5 C653.3,906.5 666.7,906.5 680.0,906.5 C693.2,906.5 706.3,907.0 719.5,907.0 C731.5,907.0 743.4,904.5 755.4,904.5 C763.3,904.5 771.1,907.0 779.0,907.0 C791.0,907.0 803.0,904.5 815.0,904.5 C821.7,904.5 828.3,907.7 835.0,907.7 C841.0,907.7 847.0,846.7 853.0,846.7 C859.7,846.7 866.3,851.9 873.0,851.9 C879.7,851.9 886.3,846.7 893.0,846.7 C899.7,846.7 906.3,851.4 913.0,851.4 C919.0,851.4 925.0,699.0 931.0,699.0 C934.3,699.0 937.7,699.3 941.0,700.0 C944.9,700.8 948.9,703.7 952.8,711.0 C958.1,720.9 963.5,866.6 968.8,866.6 C981.4,866.6 994.0,857.4 1006.6,857.4 C1012.6,857.4 1018.6,870.6 1024.6,870.6 C1033.1,870.6 1041.5,860.5 1050.0,860.5 C1055.7,860.5 1061.3,867.0 1067.0,867.0 C1079.5,867.0 1092.0,862.8 1104.5,862.8 C1111.2,862.8 1117.9,868.5 1124.6,868.5 C1130.8,868.5 1137.1,864.7 1143.3,857.0 C1149.0,849.9 1154.8,800.2 1160.5,788.0 C1167.7,772.8 1174.8,765.2 1182.0,765.2 C1188.2,765.2 1194.5,777.2 1200.7,777.2 C1207.4,777.2 1214.1,775.8 1220.8,775.8 C1226.5,775.8 1232.3,846.8 1238.0,855.6 C1244.2,865.2 1250.5,868.7 1256.7,870.0 C1263.9,871.5 1271.0,870.8 1278.2,872.3 C1284.4,873.6 1290.7,893.5 1296.9,893.5 C1303.6,893.5 1310.3,878.6 1317.0,878.6 C1323.2,878.6 1329.4,888.0 1335.6,888.0 C1341.8,888.0 1348.1,883.5 1354.3,883.5 C1361.0,883.5 1367.7,883.5 1374.4,883.5 C1380.6,883.5 1386.8,893.8 1393.0,893.8 C1399.7,893.8 1406.3,872.3 1413.0,872.3 C1419.7,872.3 1426.5,878.0 1433.2,880.6 C1439.4,883.0 1445.7,884.3 1451.9,887.2 C1458.1,890.1 1464.3,898.0 1470.5,898.0 C1476.7,898.0 1483.0,896.4 1489.2,896.4 C1502.1,896.4 1515.1,896.8 1528.0,897.2 L1528,922 L584,922 Z" fill="url(#g_purple)" stroke="none"/>
<path d="M584.0,922.0 C590.7,921.8 597.3,921.7 604.0,921.0 C610.0,920.4 616.0,891.0 622.0,891.0 C628.0,891.0 634.0,894.5 640.0,894.5 C648.0,894.5 656.0,894.5 664.0,894.5 C669.3,894.5 674.7,890.5 680.0,890.5 C688.0,890.5 696.0,890.7 704.0,891.0 C709.2,891.2 714.3,894.5 719.5,894.5 C726.2,894.5 732.8,894.5 739.5,894.5 C745.5,894.5 751.4,891.0 757.4,891.0 C764.6,891.0 771.8,894.5 779.0,894.5 C791.0,894.5 803.0,887.7 815.0,887.7 C821.7,887.7 828.3,897.0 835.0,897.0 C841.0,897.0 847.0,766.0 853.0,766.0 C859.7,766.0 866.3,788.0 873.0,788.0 C880.3,788.0 887.7,781.7 895.0,779.0 C901.0,776.8 907.0,777.0 913.0,773.0 C919.0,769.0 925.0,565.3 931.0,521.7 C937.3,475.7 943.7,452.7 950.0,452.7 C951.7,452.7 953.3,453.1 955.0,454.0 C959.7,456.4 964.3,814.8 969.0,814.8 C975.6,814.8 982.1,796.8 988.7,796.8 C995.3,796.8 1002.0,800.7 1008.6,802.8 C1015.3,804.9 1021.9,809.6 1028.6,809.6 C1034.6,809.6 1040.5,794.0 1046.5,794.0 C1052.9,794.0 1059.4,816.9 1065.8,816.9 C1072.0,816.9 1078.2,804.0 1084.4,804.0 C1091.1,804.0 1097.8,807.7 1104.5,807.7 C1110.7,807.7 1117.0,799.6 1123.2,799.6 C1129.9,799.6 1136.6,811.7 1143.3,811.7 C1149.0,811.7 1154.8,636.9 1160.5,634.6 C1167.7,631.7 1174.8,630.3 1182.0,630.3 C1188.2,630.3 1194.5,653.2 1200.7,653.2 C1207.2,653.2 1213.7,610.8 1220.2,610.8 C1221.8,610.8 1223.4,613.0 1225.0,617.4 C1229.3,629.3 1233.7,780.4 1238.0,791.0 C1244.7,807.3 1251.3,807.9 1258.0,815.4 C1271.0,830.1 1283.9,852.7 1296.9,852.7 C1302.6,852.7 1308.3,845.0 1314.0,845.0 C1321.7,845.0 1329.3,845.0 1337.0,845.0 C1343.2,845.0 1349.5,848.4 1355.7,848.4 C1361.9,848.4 1368.2,840.4 1374.4,840.4 C1381.1,840.4 1387.8,845.6 1394.5,845.6 C1400.7,845.6 1406.8,843.6 1413.0,843.6 C1420.2,843.6 1427.4,846.0 1434.6,846.0 C1440.4,846.0 1446.1,842.7 1451.9,842.7 C1458.1,842.7 1464.3,880.6 1470.5,880.6 C1476.7,880.6 1483.0,865.7 1489.2,865.7 C1495.4,865.7 1501.6,875.7 1507.8,875.7 C1514.5,875.7 1521.3,873.2 1528.0,870.8 L1528,922 L584,922 Z" fill="url(#g_orange)" stroke="none"/>
<path d="M584.0,922.0 C590.7,921.8 597.3,921.7 604.0,921.0 C610.7,920.3 617.3,916.5 624.0,916.5 C635.9,916.5 647.8,918.4 659.7,918.4 C666.5,918.4 673.2,915.6 680.0,915.6 C693.2,915.6 706.3,916.6 719.5,917.0 C752.7,917.9 785.8,918.4 819.0,918.4 C824.3,918.4 829.7,917.8 835.0,916.5 C847.7,913.5 860.3,896.5 873.0,896.5 C885.7,896.5 898.3,900.5 911.0,900.5 C917.7,900.5 924.3,856.6 931.0,856.6 C937.6,856.6 944.2,856.9 950.8,857.4 C956.8,857.9 962.8,904.5 968.8,904.5 C975.4,904.5 982.1,904.5 988.7,904.5 C995.3,904.5 1002.0,907.3 1008.6,907.3 C1014.6,907.3 1020.6,901.7 1026.6,901.7 C1034.4,901.7 1042.2,905.8 1050.0,905.8 C1062.0,905.8 1073.9,897.2 1085.9,897.2 C1092.1,897.2 1098.3,911.6 1104.5,911.6 C1111.2,911.6 1117.9,903.8 1124.6,903.8 C1130.8,903.8 1137.1,903.8 1143.3,903.8 C1149.5,903.8 1155.8,870.5 1162.0,870.5 C1168.7,870.5 1175.3,885.8 1182.0,885.8 C1194.9,885.8 1207.9,876.6 1220.8,876.6 C1226.5,876.6 1232.3,905.8 1238.0,905.8 C1244.7,905.8 1251.3,903.0 1258.0,903.0 C1264.7,903.0 1271.5,911.6 1278.2,911.6 C1284.4,911.6 1290.7,909.6 1296.9,909.6 C1303.6,909.6 1310.3,912.2 1317.0,912.2 C1323.2,912.2 1329.4,908.0 1335.6,908.0 C1348.5,908.0 1361.5,912.2 1374.4,912.2 C1381.1,912.2 1387.8,909.6 1394.5,909.6 C1406.9,909.6 1419.4,911.6 1431.8,911.6 C1438.5,911.6 1445.2,910.2 1451.9,907.3 C1457.6,904.9 1463.3,859.1 1469.0,854.2 C1475.7,848.5 1482.5,845.6 1489.2,845.6 C1495.9,845.6 1502.6,915.9 1509.3,915.9 C1515.5,915.9 1521.8,914.5 1528.0,913.0" fill="none" stroke="#c7a677" stroke-width="2.2" stroke-linejoin="round"/>
<path d="M584.0,922.0 C590.7,921.8 597.3,921.7 604.0,921.0 C610.0,920.4 616.0,912.5 622.0,912.5 C628.0,912.5 634.0,916.5 640.0,916.5 C654.6,916.5 669.1,911.6 683.7,911.6 C695.6,911.6 707.6,917.0 719.5,917.0 C739.3,917.0 759.2,913.6 779.0,913.6 C797.7,913.6 816.3,917.0 835.0,917.0 C841.0,917.0 847.0,887.6 853.0,886.5 C859.7,885.2 866.3,885.9 873.0,884.6 C879.7,883.3 886.3,877.4 893.0,877.4 C899.0,877.4 905.0,893.3 911.0,893.3 C917.7,893.3 924.3,826.1 931.0,818.8 C937.6,811.6 944.2,808.0 950.8,808.0 C956.8,808.0 962.8,891.1 968.8,891.7 C981.4,893.0 994.0,893.7 1006.6,893.7 C1019.9,893.7 1033.2,889.3 1046.5,889.3 C1053.3,889.3 1060.2,896.4 1067.0,896.4 C1073.3,896.4 1079.6,890.6 1085.9,890.6 C1098.8,890.6 1111.7,895.2 1124.6,895.2 C1130.8,895.2 1137.1,893.0 1143.3,888.6 C1149.5,884.2 1155.8,868.0 1162.0,860.0 C1168.7,851.5 1175.3,839.8 1182.0,839.8 C1188.2,839.8 1194.5,841.8 1200.7,844.0 C1207.4,846.4 1214.1,847.3 1220.8,854.0 C1227.0,860.2 1233.3,890.3 1239.5,891.5 C1246.2,892.8 1252.8,892.2 1259.5,893.5 C1265.7,894.7 1272.0,902.4 1278.2,902.4 C1284.4,902.4 1290.7,902.4 1296.9,902.4 C1303.6,902.4 1310.3,897.2 1317.0,897.2 C1323.2,897.2 1329.4,906.7 1335.6,906.7 C1348.5,906.7 1361.5,901.5 1374.4,901.5 C1387.3,901.5 1400.1,902.4 1413.0,902.4 C1419.3,902.4 1425.5,900.7 1431.8,900.7 C1438.5,900.7 1445.2,902.7 1451.9,904.4 C1458.1,906.0 1464.3,910.2 1470.5,910.2 C1476.7,910.2 1483.0,909.2 1489.2,908.7 C1495.9,908.2 1502.6,907.3 1509.3,907.3 C1515.5,907.3 1521.8,909.5 1528.0,911.6" fill="none" stroke="#4cc393" stroke-width="2.2" stroke-linejoin="round"/>
<path d="M584.0,922.0 C590.7,921.8 597.3,921.7 604.0,921.0 C616.7,919.7 629.3,904.5 642.0,904.5 C649.2,904.5 656.5,913.6 663.7,913.6 C669.7,913.6 675.7,906.5 681.7,906.5 C691.7,906.5 701.6,908.0 711.6,908.5 C720.9,909.0 730.2,909.7 739.5,909.7 C751.5,909.7 763.4,908.5 775.4,908.5 C789.9,908.5 804.5,911.6 819.0,911.6 C824.3,911.6 829.7,910.6 835.0,908.5 C841.0,906.2 847.0,864.0 853.0,863.8 C873.0,863.0 893.0,863.4 913.0,862.6 C919.0,862.4 925.0,747.0 931.0,747.0 C937.6,747.0 944.2,748.0 950.8,750.0 C956.8,751.8 962.8,869.0 968.8,872.6 C975.4,876.6 982.1,876.3 988.7,878.6 C995.3,880.9 1002.0,886.5 1008.6,886.5 C1014.6,886.5 1020.6,863.8 1026.6,863.8 C1034.4,863.8 1042.2,872.0 1050.0,873.7 C1062.4,876.4 1074.9,877.7 1087.3,877.7 C1093.0,877.7 1098.8,872.3 1104.5,872.3 C1111.2,872.3 1117.9,880.0 1124.6,880.0 C1130.8,880.0 1137.1,876.2 1143.3,868.5 C1149.5,860.8 1155.8,799.6 1162.0,799.6 C1174.9,799.6 1187.8,825.0 1200.7,825.0 C1207.1,825.0 1213.6,786.7 1220.0,786.7 C1222.7,786.7 1225.3,802.4 1228.0,814.0 C1231.8,830.6 1235.7,879.0 1239.5,879.0 C1246.2,879.0 1252.8,871.4 1259.5,871.4 C1265.7,871.4 1272.0,896.4 1278.2,896.4 C1284.4,896.4 1290.7,885.8 1296.9,885.8 C1303.6,885.8 1310.3,897.2 1317.0,897.2 C1323.2,897.2 1329.4,884.3 1335.6,884.3 C1342.3,884.3 1349.0,893.8 1355.7,893.8 C1361.9,893.8 1368.2,888.0 1374.4,888.0 C1387.3,888.0 1400.1,891.5 1413.0,891.5 C1426.0,891.5 1438.9,890.0 1451.9,890.0 C1458.1,890.0 1464.3,900.1 1470.5,901.5 C1483.4,904.4 1496.4,905.8 1509.3,905.8 C1515.5,905.8 1521.8,902.2 1528.0,898.7" fill="none" stroke="#1f6ff5" stroke-width="2.2" stroke-linejoin="round"/>
<path d="M584.0,922.0 C590.7,921.8 597.3,921.7 604.0,921.0 C610.0,920.4 616.0,908.5 622.0,907.7 C628.0,906.9 634.0,906.5 640.0,906.5 C653.3,906.5 666.7,906.5 680.0,906.5 C693.2,906.5 706.3,907.0 719.5,907.0 C731.5,907.0 743.4,904.5 755.4,904.5 C763.3,904.5 771.1,907.0 779.0,907.0 C791.0,907.0 803.0,904.5 815.0,904.5 C821.7,904.5 828.3,907.7 835.0,907.7 C841.0,907.7 847.0,846.7 853.0,846.7 C859.7,846.7 866.3,851.9 873.0,851.9 C879.7,851.9 886.3,846.7 893.0,846.7 C899.7,846.7 906.3,851.4 913.0,851.4 C919.0,851.4 925.0,699.0 931.0,699.0 C934.3,699.0 937.7,699.3 941.0,700.0 C944.9,700.8 948.9,703.7 952.8,711.0 C958.1,720.9 963.5,866.6 968.8,866.6 C981.4,866.6 994.0,857.4 1006.6,857.4 C1012.6,857.4 1018.6,870.6 1024.6,870.6 C1033.1,870.6 1041.5,860.5 1050.0,860.5 C1055.7,860.5 1061.3,867.0 1067.0,867.0 C1079.5,867.0 1092.0,862.8 1104.5,862.8 C1111.2,862.8 1117.9,868.5 1124.6,868.5 C1130.8,868.5 1137.1,864.7 1143.3,857.0 C1149.0,849.9 1154.8,800.2 1160.5,788.0 C1167.7,772.8 1174.8,765.2 1182.0,765.2 C1188.2,765.2 1194.5,777.2 1200.7,777.2 C1207.4,777.2 1214.1,775.8 1220.8,775.8 C1226.5,775.8 1232.3,846.8 1238.0,855.6 C1244.2,865.2 1250.5,868.7 1256.7,870.0 C1263.9,871.5 1271.0,870.8 1278.2,872.3 C1284.4,873.6 1290.7,893.5 1296.9,893.5 C1303.6,893.5 1310.3,878.6 1317.0,878.6 C1323.2,878.6 1329.4,888.0 1335.6,888.0 C1341.8,888.0 1348.1,883.5 1354.3,883.5 C1361.0,883.5 1367.7,883.5 1374.4,883.5 C1380.6,883.5 1386.8,893.8 1393.0,893.8 C1399.7,893.8 1406.3,872.3 1413.0,872.3 C1419.7,872.3 1426.5,878.0 1433.2,880.6 C1439.4,883.0 1445.7,884.3 1451.9,887.2 C1458.1,890.1 1464.3,898.0 1470.5,898.0 C1476.7,898.0 1483.0,896.4 1489.2,896.4 C1502.1,896.4 1515.1,896.8 1528.0,897.2" fill="none" stroke="#7b55dd" stroke-width="2.2" stroke-linejoin="round"/>
<path d="M584.0,922.0 C590.7,921.8 597.3,921.7 604.0,921.0 C610.0,920.4 616.0,891.0 622.0,891.0 C628.0,891.0 634.0,894.5 640.0,894.5 C648.0,894.5 656.0,894.5 664.0,894.5 C669.3,894.5 674.7,890.5 680.0,890.5 C688.0,890.5 696.0,890.7 704.0,891.0 C709.2,891.2 714.3,894.5 719.5,894.5 C726.2,894.5 732.8,894.5 739.5,894.5 C745.5,894.5 751.4,891.0 757.4,891.0 C764.6,891.0 771.8,894.5 779.0,894.5 C791.0,894.5 803.0,887.7 815.0,887.7 C821.7,887.7 828.3,897.0 835.0,897.0 C841.0,897.0 847.0,766.0 853.0,766.0 C859.7,766.0 866.3,788.0 873.0,788.0 C880.3,788.0 887.7,781.7 895.0,779.0 C901.0,776.8 907.0,777.0 913.0,773.0 C919.0,769.0 925.0,565.3 931.0,521.7 C937.3,475.7 943.7,452.7 950.0,452.7 C951.7,452.7 953.3,453.1 955.0,454.0 C959.7,456.4 964.3,814.8 969.0,814.8 C975.6,814.8 982.1,796.8 988.7,796.8 C995.3,796.8 1002.0,800.7 1008.6,802.8 C1015.3,804.9 1021.9,809.6 1028.6,809.6 C1034.6,809.6 1040.5,794.0 1046.5,794.0 C1052.9,794.0 1059.4,816.9 1065.8,816.9 C1072.0,816.9 1078.2,804.0 1084.4,804.0 C1091.1,804.0 1097.8,807.7 1104.5,807.7 C1110.7,807.7 1117.0,799.6 1123.2,799.6 C1129.9,799.6 1136.6,811.7 1143.3,811.7 C1149.0,811.7 1154.8,636.9 1160.5,634.6 C1167.7,631.7 1174.8,630.3 1182.0,630.3 C1188.2,630.3 1194.5,653.2 1200.7,653.2 C1207.2,653.2 1213.7,610.8 1220.2,610.8 C1221.8,610.8 1223.4,613.0 1225.0,617.4 C1229.3,629.3 1233.7,780.4 1238.0,791.0 C1244.7,807.3 1251.3,807.9 1258.0,815.4 C1271.0,830.1 1283.9,852.7 1296.9,852.7 C1302.6,852.7 1308.3,845.0 1314.0,845.0 C1321.7,845.0 1329.3,845.0 1337.0,845.0 C1343.2,845.0 1349.5,848.4 1355.7,848.4 C1361.9,848.4 1368.2,840.4 1374.4,840.4 C1381.1,840.4 1387.8,845.6 1394.5,845.6 C1400.7,845.6 1406.8,843.6 1413.0,843.6 C1420.2,843.6 1427.4,846.0 1434.6,846.0 C1440.4,846.0 1446.1,842.7 1451.9,842.7 C1458.1,842.7 1464.3,880.6 1470.5,880.6 C1476.7,880.6 1483.0,865.7 1489.2,865.7 C1495.4,865.7 1501.6,875.7 1507.8,875.7 C1514.5,875.7 1521.3,873.2 1528.0,870.8" fill="none" stroke="#f3843a" stroke-width="2.2" stroke-linejoin="round"/>
</svg>
<div class="b" style="left:504.0px;top:997.2px;width:24px;height:2.2px;background:#4cc393"></div>
<div class="t" style="left:548.7px;top:985.8px;font-size:22px;line-height:22px;font-family:'Liberation Mono', monospace;color:#4cc393;font-weight:400;;-webkit-text-stroke:0.3px #4cc393">/aws/lambda/payment-processor</div>
<div class="b" style="left:947.0px;top:997.2px;width:24px;height:2.2px;background:#7b55dd"></div>
<div class="t" style="left:991.7px;top:985.8px;font-size:22px;line-height:22px;font-family:'Liberation Mono', monospace;color:#7b55dd;font-weight:400;;-webkit-text-stroke:0.3px #7b55dd">/aws/lambda/order-service</div>
<div class="b" style="left:505.0px;top:1031.7px;width:24px;height:2.2px;background:#c7a677"></div>
<div class="t" style="left:549.7px;top:1020.3px;font-size:22px;line-height:22px;font-family:'Liberation Mono', monospace;color:#c7a677;font-weight:400;;-webkit-text-stroke:0.3px #c7a677">/application/background-jobs</div>
<div class="b" style="left:933.5px;top:1031.7px;width:24px;height:2.2px;background:#1f6ff5"></div>
<div class="t" style="left:978.2px;top:1020.3px;font-size:22px;line-height:22px;font-family:'Liberation Mono', monospace;color:#1f6ff5;font-weight:400;;-webkit-text-stroke:0.3px #1f6ff5">/aws/lambda/auth-service</div>
<div class="t" style="left:1309.3px;top:1020.3px;font-size:22px;line-height:22px;font-family:'Liberation Mono', monospace;color:#909296;font-weight:400;text-decoration:underline;text-underline-offset:4px;-webkit-text-stroke:0.3px #909296">+1 more</div>
<div class="b" style="left:1563px;top:1060px;width:5px;height:10px;background:#c8c9cc"></div>
<div class="b" style="left:1558px;top:1065px;width:10px;height:5px;background:#c8c9cc"></div>
<div class="t" style="left:1629.9px;top:283.9px;font-size:25.9px;line-height:25.9px;font-family:'Liberation Mono', monospace;color:#c9cacd;font-weight:400;;-webkit-text-stroke:0.3px #c9cacd">Logs by severity</div>
<svg class="i" style="left:2552.0px;top:281.8px;width:24.0px;height:24.2px;color:#a6a7ab;" viewBox="2.2 2.2 19.6 20.6" preserveAspectRatio="none" fill="none" stroke="currentColor" stroke-width="1.5" stroke-linecap="round" stroke-linejoin="round"><rect x="8" y="3" width="13" height="13" rx="2.5"/><path d="M16 19.5a2.5 2.5 0 0 1-2.5 2.5h-8a2.5 2.5 0 0 1-2.5-2.5v-8a2.5 2.5 0 0 1 2.5-2.5"/></svg>
<svg class="i" style="left:2596.0px;top:282.2px;width:24.0px;height:23.8px;color:#a6a7ab;" viewBox="0.7 2.6 20.7 20.7" preserveAspectRatio="none" fill="none" stroke="currentColor" stroke-width="1.5" stroke-linecap="round" stroke-linejoin="round"><path d="M1.5 22.5l1.6-5.6L16.6 3.4l4 4L7.1 20.9z"/><path d="M14.6 5.4l4 4"/><path d="M3.1 16.9l4 4"/></svg>
<svg class="i" style="left:2642.0px;top:282.0px;width:20.0px;height:23.0px;color:#a6a7ab;" viewBox="2.75 3.25 18.5 18.75" preserveAspectRatio="none" fill="none" stroke="currentColor" stroke-width="1.5" stroke-linecap="round" stroke-linejoin="round"><rect x="3.5" y="5.5" width="17" height="3" rx="1.5"/><path d="M10.5 4.2h3"/><path d="M5.5 8.5l1 11a2 2 0 0 0 2 1.8h7a2 2 0 0 0 2-1.8l1-11"/><path d="M9.5 11.5v6M12 11.5v6M14.5 11.5v6"/></svg>
<svg class="i" style="left:0;top:0;width:3812px;height:1856px" viewBox="0 0 3812 1856">
<path d="M1700,341.8 H2541" stroke="#2b2d31" stroke-width="2" stroke-dasharray="6 6"/>
<path d="M1700,495.2 H2663.8" stroke="#2b2d31" stroke-width="2" stroke-dasharray="6 6"/>
<path d="M1700,648.8 H2663.8" stroke="#2b2d31" stroke-width="2" stroke-dasharray="6 6"/>
<path d="M1700,802.3 H2663.8" stroke="#2b2d31" stroke-width="2" stroke-dasharray="6 6"/>
<path d="M2104.9,341.8 V955.8" stroke="#2b2d31" stroke-width="2" stroke-dasharray="6 6"/>
<path d="M2644.6,404 V955.8" stroke="#2b2d31" stroke-width="2" stroke-dasharray="6 6"/>
<path d="M2663.8,404 V955.8" stroke="#2b2d31" stroke-width="2" stroke-dasharray="6 6"/>
<path d="M1700,341.8 V967.8" stroke="#6c6c6e" stroke-width="2"/>
<path d="M1700,955.8 H2663.8" stroke="#6c6c6e" stroke-width="2"/>
<path d="M1688,341.8 H1700" stroke="#6c6c6e" stroke-width="2"/>
<path d="M1688,495.2 H1700" stroke="#6c6c6e" stroke-width="2"/>
<path d="M1688,648.8 H1700" stroke="#6c6c6e" stroke-width="2"/>
<path d="M1688,802.3 H1700" stroke="#6c6c6e" stroke-width="2"/>
<path d="M1688,955.8 H1700" stroke="#6c6c6e" stroke-width="2"/>
<path d="M1700,955.8 V967.8" stroke="#6c6c6e" stroke-width="2"/>
<path d="M2104.9,955.8 V967.8" stroke="#6c6c6e" stroke-width="2"/>
<path d="M2644.6,955.8 V967.8" stroke="#6c6c6e" stroke-width="2"/>
</svg>
<div class="t" style="left:1631.7px;top:340.1px;width:52.8px;text-align:right;font-size:22px;line-height:22px;font-family:'Liberation Mono', monospace;color:#747579">1.2K</div>
<div class="t" style="left:1644.9px;top:486.5px;width:39.6px;text-align:right;font-size:22px;line-height:22px;font-family:'Liberation Mono', monospace;color:#747579">900</div>
<div class="t" style="left:1644.9px;top:640.1px;width:39.6px;text-align:right;font-size:22px;line-height:22px;font-family:'Liberation Mono', monospace;color:#747579">600</div>
<div class="t" style="left:1644.9px;top:793.6px;width:39.6px;text-align:right;font-size:22px;line-height:22px;font-family:'Liberation Mono', monospace;color:#747579">300</div>
<div class="t" style="left:1671.3px;top:947.1px;width:13.2px;text-align:right;font-size:22px;line-height:22px;font-family:'Liberation Mono', monospace;color:#747579">0</div>
<div class="t" style="left:1610.1px;top:970.3px;font-size:22px;line-height:22px;font-family:'Liberation Mono', monospace;color:#747579;font-weight:400;;-webkit-text-stroke:0.3px #747579">Dec 6 5:00:00 PM</div>
<div class="t" style="left:2038.7px;top:970.3px;font-size:22px;line-height:22px;font-family:'Liberation Mono', monospace;color:#747579;font-weight:400;;-webkit-text-stroke:0.3px #747579">3:30:00 AM</div>
<div class="t" style="left:2541.2px;top:970.3px;font-size:22px;line-height:22px;font-family:'Liberation Mono', monospace;color:#747579;font-weight:400;;-webkit-text-stroke:0.3px #747579">5:30:00 PM</div>
<svg class="i" style="left:2574.0px;top:355.0px;width:26.0px;height:26.0px;color:#8e9096;" viewBox="3.2 3.2 17.6 17.6" preserveAspectRatio="none" fill="none" stroke="currentColor" stroke-width="1.5" stroke-linecap="round" stroke-linejoin="round"><path d="M4 4v16h16"/><path d="M7 15l4-5 3 3 5-6"/></svg>
<svg class="i" style="left:2617.5px;top:356.6px;width:22.9px;height:22.7px;color:#51cf94;" viewBox="2.2 3.2 18.6 17.6" preserveAspectRatio="none" fill="none" stroke="currentColor" stroke-width="1.5" stroke-linecap="round" stroke-linejoin="round"><rect x="3" y="14" width="4" height="6" rx="1"/><rect x="9.5" y="9" width="4" height="11" rx="1"/><rect x="16" y="4" width="4" height="16" rx="1"/></svg>
<svg class="i" style="left:0;top:0;width:3812px;height:1856px" viewBox="0 0 3812 1856">
<rect x="1730.9" y="932.8" width="14.2" height="23.1" fill="#4abe91"/>
<rect x="1730.9" y="923.9" width="14.2" height="8.9" fill="#f8bb3a"/>
<rect x="1730.9" y="921.6" width="14.2" height="2.3" fill="#e5364f"/>
<rect x="1750.2" y="930.0" width="14.2" height="25.9" fill="#4abe91"/>
<rect x="1750.2" y="922.7" width="14.2" height="7.3" fill="#f8bb3a"/>
<rect x="1750.2" y="919.6" width="14.2" height="3.1" fill="#e5364f"/>
<rect x="1769.5" y="935.5" width="14.2" height="20.4" fill="#4abe91"/>
<rect x="1769.5" y="929.2" width="14.2" height="6.3" fill="#f8bb3a"/>
<rect x="1769.5" y="926.9" width="14.2" height="2.3" fill="#e5364f"/>
<rect x="1788.7" y="928.2" width="14.2" height="27.7" fill="#4abe91"/>
<rect x="1788.7" y="917.8" width="14.2" height="10.4" fill="#f8bb3a"/>
<rect x="1788.7" y="914.3" width="14.2" height="3.5" fill="#e5364f"/>
<rect x="1808.0" y="926.9" width="14.2" height="29.0" fill="#4abe91"/>
<rect x="1808.0" y="917.8" width="14.2" height="9.1" fill="#f8bb3a"/>
<rect x="1808.0" y="915.8" width="14.2" height="2.0" fill="#e5364f"/>
<rect x="1827.3" y="935.5" width="14.2" height="20.4" fill="#4abe91"/>
<rect x="1827.3" y="927.1" width="14.2" height="8.4" fill="#f8bb3a"/>
<rect x="1827.3" y="925.1" width="14.2" height="2.0" fill="#e5364f"/>
<rect x="1846.6" y="931.5" width="14.2" height="24.4" fill="#4abe91"/>
<rect x="1846.6" y="924.9" width="14.2" height="6.6" fill="#f8bb3a"/>
<rect x="1846.6" y="922.9" width="14.2" height="2.0" fill="#e5364f"/>
<rect x="1865.9" y="931.0" width="14.2" height="24.9" fill="#4abe91"/>
<rect x="1865.9" y="920.9" width="14.2" height="10.1" fill="#f8bb3a"/>
<rect x="1865.9" y="918.6" width="14.2" height="2.3" fill="#e5364f"/>
<rect x="1885.1" y="933.5" width="14.2" height="22.4" fill="#4abe91"/>
<rect x="1885.1" y="924.7" width="14.2" height="8.8" fill="#f8bb3a"/>
<rect x="1885.1" y="920.9" width="14.2" height="3.8" fill="#e5364f"/>
<rect x="1904.4" y="931.5" width="14.2" height="24.4" fill="#4abe91"/>
<rect x="1904.4" y="921.9" width="14.2" height="9.6" fill="#f8bb3a"/>
<rect x="1904.4" y="920.1" width="14.2" height="1.8" fill="#e5364f"/>
<rect x="1923.7" y="929.3" width="14.2" height="26.6" fill="#4abe91"/>
<rect x="1923.7" y="918.9" width="14.2" height="10.4" fill="#f8bb3a"/>
<rect x="1923.7" y="916.5" width="14.2" height="2.4" fill="#e5364f"/>
<rect x="1943.0" y="933.0" width="14.2" height="22.9" fill="#4abe91"/>
<rect x="1943.0" y="926.4" width="14.2" height="6.6" fill="#f8bb3a"/>
<rect x="1943.0" y="924.9" width="14.2" height="1.5" fill="#e5364f"/>
<rect x="1962.3" y="816.9" width="14.2" height="139.0" fill="#4abe91"/>
<rect x="1962.3" y="783.4" width="14.2" height="33.5" fill="#f8bb3a"/>
<rect x="1962.3" y="773.8" width="14.2" height="9.6" fill="#e5364f"/>
<rect x="1981.5" y="829.0" width="14.2" height="126.9" fill="#4abe91"/>
<rect x="1981.5" y="792.9" width="14.2" height="36.1" fill="#f8bb3a"/>
<rect x="1981.5" y="785.0" width="14.2" height="7.9" fill="#e5364f"/>
<rect x="2000.8" y="823.2" width="14.2" height="132.7" fill="#4abe91"/>
<rect x="2000.8" y="779.2" width="14.2" height="44.0" fill="#f8bb3a"/>
<rect x="2000.8" y="775.4" width="14.2" height="3.8" fill="#e5364f"/>
<rect x="2020.1" y="830.6" width="14.2" height="125.3" fill="#4abe91"/>
<rect x="2020.1" y="789.7" width="14.2" height="40.9" fill="#f8bb3a"/>
<rect x="2020.1" y="783.4" width="14.2" height="6.3" fill="#e5364f"/>
<rect x="2039.4" y="591.7" width="14.2" height="364.2" fill="#4abe91"/>
<rect x="2039.4" y="465.7" width="14.2" height="126.0" fill="#f8bb3a"/>
<rect x="2039.4" y="442.7" width="14.2" height="23.0" fill="#e5364f"/>
<rect x="2058.7" y="571.6" width="14.2" height="384.3" fill="#4abe91"/>
<rect x="2058.7" y="436.8" width="14.2" height="134.8" fill="#f8bb3a"/>
<rect x="2058.7" y="409.7" width="14.2" height="27.1" fill="#e5364f"/>
<rect x="2077.9" y="858.3" width="14.2" height="97.6" fill="#4abe91"/>
<rect x="2077.9" y="824.2" width="14.2" height="34.1" fill="#f8bb3a"/>
<rect x="2077.9" y="817.8" width="14.2" height="6.4" fill="#e5364f"/>
<rect x="2097.2" y="857.7" width="14.2" height="98.2" fill="#4abe91"/>
<rect x="2097.2" y="820.0" width="14.2" height="37.7" fill="#f8bb3a"/>
<rect x="2097.2" y="811.1" width="14.2" height="8.9" fill="#e5364f"/>
<rect x="2116.5" y="850.4" width="14.2" height="105.5" fill="#4abe91"/>
<rect x="2116.5" y="823.9" width="14.2" height="26.5" fill="#f8bb3a"/>
<rect x="2116.5" y="816.9" width="14.2" height="7.0" fill="#e5364f"/>
<rect x="2135.8" y="860.0" width="14.2" height="95.9" fill="#4abe91"/>
<rect x="2135.8" y="822.3" width="14.2" height="37.7" fill="#f8bb3a"/>
<rect x="2135.8" y="812.0" width="14.2" height="10.3" fill="#e5364f"/>
<rect x="2155.1" y="841.7" width="14.2" height="114.2" fill="#4abe91"/>
<rect x="2155.1" y="813.0" width="14.2" height="28.7" fill="#f8bb3a"/>
<rect x="2155.1" y="804.1" width="14.2" height="8.9" fill="#e5364f"/>
<rect x="2174.3" y="865.4" width="14.2" height="90.5" fill="#4abe91"/>
<rect x="2174.3" y="832.8" width="14.2" height="32.6" fill="#f8bb3a"/>
<rect x="2174.3" y="824.8" width="14.2" height="8.0" fill="#e5364f"/>
<rect x="2193.6" y="882.9" width="14.2" height="73.0" fill="#4abe91"/>
<rect x="2193.6" y="852.6" width="14.2" height="30.3" fill="#f8bb3a"/>
<rect x="2193.6" y="811.1" width="14.2" height="41.5" fill="#e5364f"/>
<rect x="2212.9" y="855.2" width="14.2" height="100.7" fill="#4abe91"/>
<rect x="2212.9" y="823.2" width="14.2" height="32.0" fill="#f8bb3a"/>
<rect x="2212.9" y="817.8" width="14.2" height="5.4" fill="#e5364f"/>
<rect x="2232.2" y="857.7" width="14.2" height="98.2" fill="#4abe91"/>
<rect x="2232.2" y="824.2" width="14.2" height="33.5" fill="#f8bb3a"/>
<rect x="2232.2" y="817.8" width="14.2" height="6.4" fill="#e5364f"/>
<rect x="2251.5" y="862.2" width="14.2" height="93.7" fill="#4abe91"/>
<rect x="2251.5" y="821.0" width="14.2" height="41.2" fill="#f8bb3a"/>
<rect x="2251.5" y="811.1" width="14.2" height="9.9" fill="#e5364f"/>
<rect x="2270.7" y="700.4" width="14.2" height="255.5" fill="#4abe91"/>
<rect x="2270.7" y="619.0" width="14.2" height="81.4" fill="#f8bb3a"/>
<rect x="2270.7" y="607.2" width="14.2" height="11.8" fill="#e5364f"/>
<rect x="2290.0" y="695.6" width="14.2" height="260.3" fill="#4abe91"/>
<rect x="2290.0" y="616.8" width="14.2" height="78.8" fill="#f8bb3a"/>
<rect x="2290.0" y="598.3" width="14.2" height="18.5" fill="#e5364f"/>
<rect x="2309.3" y="718.6" width="14.2" height="237.3" fill="#4abe91"/>
<rect x="2309.3" y="636.6" width="14.2" height="82.0" fill="#f8bb3a"/>
<rect x="2309.3" y="622.9" width="14.2" height="13.7" fill="#e5364f"/>
<rect x="2328.6" y="695.6" width="14.2" height="260.3" fill="#4abe91"/>
<rect x="2328.6" y="606.3" width="14.2" height="89.3" fill="#f8bb3a"/>
<rect x="2328.6" y="582.3" width="14.2" height="24.0" fill="#e5364f"/>
<rect x="2347.9" y="851.7" width="14.2" height="104.2" fill="#4abe91"/>
<rect x="2347.9" y="818.7" width="14.2" height="33.0" fill="#f8bb3a"/>
<rect x="2347.9" y="808.7" width="14.2" height="10.0" fill="#e5364f"/>
<rect x="2367.1" y="855.7" width="14.2" height="100.2" fill="#4abe91"/>
<rect x="2367.1" y="829.4" width="14.2" height="26.3" fill="#f8bb3a"/>
<rect x="2367.1" y="820.9" width="14.2" height="8.5" fill="#e5364f"/>
<rect x="2386.4" y="888.9" width="14.2" height="67.0" fill="#4abe91"/>
<rect x="2386.4" y="862.1" width="14.2" height="26.8" fill="#f8bb3a"/>
<rect x="2386.4" y="855.7" width="14.2" height="6.4" fill="#e5364f"/>
<rect x="2405.7" y="891.9" width="14.2" height="64.0" fill="#4abe91"/>
<rect x="2405.7" y="871.7" width="14.2" height="20.2" fill="#f8bb3a"/>
<rect x="2405.7" y="868.0" width="14.2" height="3.7" fill="#e5364f"/>
<rect x="2425.0" y="904.4" width="14.2" height="51.5" fill="#4abe91"/>
<rect x="2425.0" y="887.6" width="14.2" height="16.8" fill="#f8bb3a"/>
<rect x="2425.0" y="861.0" width="14.2" height="26.6" fill="#e5364f"/>
<rect x="2444.3" y="887.1" width="14.2" height="68.8" fill="#4abe91"/>
<rect x="2444.3" y="865.6" width="14.2" height="21.5" fill="#f8bb3a"/>
<rect x="2444.3" y="862.1" width="14.2" height="3.5" fill="#e5364f"/>
<rect x="2463.5" y="894.0" width="14.2" height="61.9" fill="#4abe91"/>
<rect x="2463.5" y="871.2" width="14.2" height="22.8" fill="#f8bb3a"/>
<rect x="2463.5" y="865.0" width="14.2" height="6.2" fill="#e5364f"/>
<rect x="2482.8" y="888.4" width="14.2" height="67.5" fill="#4abe91"/>
<rect x="2482.8" y="863.7" width="14.2" height="24.7" fill="#f8bb3a"/>
<rect x="2482.8" y="858.9" width="14.2" height="4.8" fill="#e5364f"/>
<rect x="2502.1" y="892.9" width="14.2" height="63.0" fill="#4abe91"/>
<rect x="2502.1" y="871.7" width="14.2" height="21.2" fill="#f8bb3a"/>
<rect x="2502.1" y="866.9" width="14.2" height="4.8" fill="#e5364f"/>
<rect x="2521.4" y="886.0" width="14.2" height="69.9" fill="#4abe91"/>
<rect x="2521.4" y="860.8" width="14.2" height="25.2" fill="#f8bb3a"/>
<rect x="2521.4" y="856.5" width="14.2" height="4.3" fill="#e5364f"/>
<rect x="2540.7" y="894.0" width="14.2" height="61.9" fill="#4abe91"/>
<rect x="2540.7" y="866.1" width="14.2" height="27.9" fill="#f8bb3a"/>
<rect x="2540.7" y="861.8" width="14.2" height="4.3" fill="#e5364f"/>
<rect x="2559.9" y="887.6" width="14.2" height="68.3" fill="#4abe91"/>
<rect x="2559.9" y="866.1" width="14.2" height="21.5" fill="#f8bb3a"/>
<rect x="2559.9" y="861.8" width="14.2" height="4.3" fill="#e5364f"/>
<rect x="2579.2" y="894.8" width="14.2" height="61.1" fill="#4abe91"/>
<rect x="2579.2" y="872.8" width="14.2" height="22.0" fill="#f8bb3a"/>
<rect x="2579.2" y="869.0" width="14.2" height="3.8" fill="#e5364f"/>
<rect x="2598.5" y="882.8" width="14.2" height="73.1" fill="#4abe91"/>
<rect x="2598.5" y="860.0" width="14.2" height="22.8" fill="#f8bb3a"/>
<rect x="2598.5" y="856.0" width="14.2" height="4.0" fill="#e5364f"/>
<rect x="2617.8" y="915.8" width="14.2" height="40.1" fill="#4abe91"/>
<rect x="2617.8" y="903.6" width="14.2" height="12.2" fill="#f8bb3a"/>
<rect x="2617.8" y="900.0" width="14.2" height="3.6" fill="#e5364f"/>
<rect x="2637.1" y="914.7" width="14.2" height="41.2" fill="#4abe91"/>
<rect x="2637.1" y="898.8" width="14.2" height="15.9" fill="#f8bb3a"/>
<rect x="2637.1" y="894.0" width="14.2" height="4.8" fill="#e5364f"/>
</svg>
<div class="b" style="left:1620.0px;top:1029.7px;width:24px;height:2.2px;background:#4abe91"></div>
<div class="t" style="left:1664.7px;top:1018.3px;font-size:22px;line-height:22px;font-family:'Liberation Mono', monospace;color:#4abe91;font-weight:400;;-webkit-text-stroke:0.3px #4abe91">INFO</div>
<div class="b" style="left:1733.0px;top:1029.7px;width:24px;height:2.2px;background:#f8bb3a"></div>
<div class="t" style="left:1777.7px;top:1018.3px;font-size:22px;line-height:22px;font-family:'Liberation Mono', monospace;color:#f8bb3a;font-weight:400;;-webkit-text-stroke:0.3px #f8bb3a">WARN</div>
<div class="b" style="left:1846.5px;top:1029.7px;width:24px;height:2.2px;background:#e5364f"></div>
<div class="t" style="left:1891.2px;top:1018.3px;font-size:22px;line-height:22px;font-family:'Liberation Mono', monospace;color:#e5364f;font-weight:400;;-webkit-text-stroke:0.3px #e5364f">ERROR</div>
<div class="b" style="left:1972.5px;top:1029.7px;width:24px;height:2.2px;background:#e5364f"></div>
<div class="t" style="left:2017.2px;top:1018.3px;font-size:22px;line-height:22px;font-family:'Liberation Mono', monospace;color:#e5364f;font-weight:400;;-webkit-text-stroke:0.3px #e5364f">FATAL</div>
<div class="b" style="left:2679px;top:1060px;width:5px;height:10px;background:#c8c9cc"></div>
<div class="b" style="left:2674px;top:1065px;width:10px;height:5px;background:#c8c9cc"></div>
<div class="t" style="left:2746.6px;top:283.3px;font-size:25.9px;line-height:25.9px;font-family:'Liberation Mono', monospace;color:#c9cacd;font-weight:400;;-webkit-text-stroke:0.3px #c9cacd">Error distribution by log group</div>
<svg class="i" style="left:0;top:0;width:3812px;height:1856px" viewBox="0 0 3812 1856">
<path d="M2818,342 V934" stroke="#6c6c6e" stroke-width="2"/>
<path d="M2818,922 H3780.5" stroke="#6c6c6e" stroke-width="2"/>
<path d="M2806,342 H2818" stroke="#6c6c6e" stroke-width="2"/>
<path d="M2806,487 H2818" stroke="#6c6c6e" stroke-width="2"/>
<path d="M2806,632 H2818" stroke="#6c6c6e" stroke-width="2"/>
<path d="M2806,777 H2818" stroke="#6c6c6e" stroke-width="2"/>
<path d="M2806,922 H2818" stroke="#6c6c6e" stroke-width="2"/>
<path d="M2818,922 V934" stroke="#6c6c6e" stroke-width="2"/>
<path d="M3222.5,922 V934" stroke="#6c6c6e" stroke-width="2"/>
<path d="M3763,922 V934" stroke="#6c6c6e" stroke-width="2"/>
</svg>
<div class="t" style="left:2776.1px;top:340.3px;width:26.4px;text-align:right;font-size:22px;line-height:22px;font-family:'Liberation Mono', monospace;color:#747579">80</div>
<div class="t" style="left:2776.1px;top:478.3px;width:26.4px;text-align:right;font-size:22px;line-height:22px;font-family:'Liberation Mono', monospace;color:#747579">60</div>
<div class="t" style="left:2776.1px;top:623.3px;width:26.4px;text-align:right;font-size:22px;line-height:22px;font-family:'Liberation Mono', monospace;color:#747579">40</div>
<div class="t" style="left:2776.1px;top:768.3px;width:26.4px;text-align:right;font-size:22px;line-height:22px;font-family:'Liberation Mono', monospace;color:#747579">20</div>
<div class="t" style="left:2789.3px;top:913.3px;width:13.2px;text-align:right;font-size:22px;line-height:22px;font-family:'Liberation Mono', monospace;color:#747579">0</div>
<div class="t" style="left:2727.5px;top:937.7px;font-size:22px;line-height:22px;font-family:'Liberation Mono', monospace;color:#747579;font-weight:400;;-webkit-text-stroke:0.3px #747579">Dec 6 5:00:00 PM</div>
<div class="t" style="left:3156.2px;top:937.7px;font-size:22px;line-height:22px;font-family:'Liberation Mono', monospace;color:#747579;font-weight:400;;-webkit-text-stroke:0.3px #747579">3:30:00 AM</div>
<div class="t" style="left:3658.7px;top:937.7px;font-size:22px;line-height:22px;font-family:'Liberation Mono', monospace;color:#747579;font-weight:400;;-webkit-text-stroke:0.3px #747579">5:30:00 PM</div>
<svg class="i" style="left:3692.0px;top:355.0px;width:26.0px;height:26.0px;color:#8e9096;" viewBox="3.2 3.2 17.6 17.6" preserveAspectRatio="none" fill="none" stroke="currentColor" stroke-width="1.5" stroke-linecap="round" stroke-linejoin="round"><path d="M4 4v16h16"/><path d="M7 15l4-5 3 3 5-6"/></svg>
<svg class="i" style="left:3735.5px;top:356.6px;width:22.9px;height:22.7px;color:#51cf94;" viewBox="2.2 3.2 18.6 17.6" preserveAspectRatio="none" fill="none" stroke="currentColor" stroke-width="1.5" stroke-linecap="round" stroke-linejoin="round"><rect x="3" y="14" width="4" height="6" rx="1"/><rect x="9.5" y="9" width="4" height="11" rx="1"/><rect x="16" y="4" width="4" height="16" rx="1"/></svg>
<svg class="i" style="left:0;top:0;width:3812px;height:1856px" viewBox="0 0 3812 1856">
<rect x="2848.7" y="914.8" width="14.2" height="7.2" fill="#4abe91"/>
<rect x="2848.7" y="900.2" width="14.2" height="14.5" fill="#7152d4"/>
<rect x="2868.0" y="914.8" width="14.2" height="7.2" fill="#7152d4"/>
<rect x="2868.0" y="893.0" width="14.2" height="21.8" fill="#c4a576"/>
<rect x="2887.3" y="914.8" width="14.2" height="7.2" fill="#7152d4"/>
<rect x="2887.3" y="907.5" width="14.2" height="7.2" fill="#c4a576"/>
<rect x="2887.3" y="900.2" width="14.2" height="7.2" fill="#1a6ef5"/>
<rect x="2906.6" y="914.8" width="14.2" height="7.2" fill="#7152d4"/>
<rect x="2906.6" y="893.0" width="14.2" height="21.8" fill="#c4a576"/>
<rect x="2906.6" y="885.8" width="14.2" height="7.2" fill="#f07b30"/>
<rect x="2925.9" y="914.8" width="14.2" height="7.2" fill="#c4a576"/>
<rect x="2945.1" y="914.8" width="14.2" height="7.2" fill="#7152d4"/>
<rect x="2945.1" y="907.5" width="14.2" height="7.2" fill="#c4a576"/>
<rect x="2964.4" y="914.8" width="14.2" height="7.2" fill="#4abe91"/>
<rect x="2964.4" y="907.5" width="14.2" height="7.2" fill="#c4a576"/>
<rect x="2964.4" y="900.2" width="14.2" height="7.2" fill="#f07b30"/>
<rect x="2983.7" y="914.8" width="14.2" height="7.2" fill="#7152d4"/>
<rect x="2983.7" y="907.5" width="14.2" height="7.2" fill="#c4a576"/>
<rect x="2983.7" y="900.2" width="14.2" height="7.2" fill="#1a6ef5"/>
<rect x="3003.0" y="914.8" width="14.2" height="7.2" fill="#4abe91"/>
<rect x="3003.0" y="907.5" width="14.2" height="7.2" fill="#7152d4"/>
<rect x="3003.0" y="885.8" width="14.2" height="21.8" fill="#c4a576"/>
<rect x="3022.3" y="907.5" width="14.2" height="14.5" fill="#7152d4"/>
<rect x="3041.6" y="914.8" width="14.2" height="7.2" fill="#4abe91"/>
<rect x="3041.6" y="900.2" width="14.2" height="14.5" fill="#7152d4"/>
<rect x="3060.9" y="914.8" width="14.2" height="7.2" fill="#c4a576"/>
<rect x="3080.2" y="914.8" width="14.2" height="7.2" fill="#4abe91"/>
<rect x="3080.2" y="878.5" width="14.2" height="36.2" fill="#7152d4"/>
<rect x="3080.2" y="820.5" width="14.2" height="58.0" fill="#c4a576"/>
<rect x="3080.2" y="798.8" width="14.2" height="21.8" fill="#f07b30"/>
<rect x="3099.5" y="914.8" width="14.2" height="7.2" fill="#4abe91"/>
<rect x="3099.5" y="871.2" width="14.2" height="43.5" fill="#7152d4"/>
<rect x="3099.5" y="827.8" width="14.2" height="43.5" fill="#c4a576"/>
<rect x="3099.5" y="820.5" width="14.2" height="7.2" fill="#1a6ef5"/>
<rect x="3118.8" y="893.0" width="14.2" height="29.0" fill="#7152d4"/>
<rect x="3118.8" y="885.8" width="14.2" height="7.2" fill="#c4a576"/>
<rect x="3118.8" y="878.5" width="14.2" height="7.2" fill="#1a6ef5"/>
<rect x="3138.0" y="885.8" width="14.2" height="36.2" fill="#7152d4"/>
<rect x="3138.0" y="849.5" width="14.2" height="36.2" fill="#c4a576"/>
<rect x="3138.0" y="842.2" width="14.2" height="7.2" fill="#1a6ef5"/>
<rect x="3157.3" y="914.8" width="14.2" height="7.2" fill="#4abe91"/>
<rect x="3157.3" y="762.5" width="14.2" height="152.2" fill="#7152d4"/>
<rect x="3157.3" y="632.0" width="14.2" height="130.5" fill="#c4a576"/>
<rect x="3157.3" y="610.2" width="14.2" height="21.8" fill="#f07b30"/>
<rect x="3176.6" y="885.8" width="14.2" height="36.2" fill="#4abe91"/>
<rect x="3176.6" y="639.2" width="14.2" height="246.5" fill="#7152d4"/>
<rect x="3176.6" y="588.5" width="14.2" height="50.8" fill="#c4a576"/>
<rect x="3176.6" y="559.5" width="14.2" height="29.0" fill="#1a6ef5"/>
<rect x="3176.6" y="552.2" width="14.2" height="7.2" fill="#f07b30"/>
<rect x="3195.9" y="885.8" width="14.2" height="36.2" fill="#7152d4"/>
<rect x="3195.9" y="856.8" width="14.2" height="29.0" fill="#c4a576"/>
<rect x="3195.9" y="849.5" width="14.2" height="7.2" fill="#f07b30"/>
<rect x="3215.2" y="878.5" width="14.2" height="43.5" fill="#7152d4"/>
<rect x="3215.2" y="806.0" width="14.2" height="72.5" fill="#c4a576"/>
<rect x="3234.5" y="914.8" width="14.2" height="7.2" fill="#4abe91"/>
<rect x="3234.5" y="856.8" width="14.2" height="58.0" fill="#7152d4"/>
<rect x="3234.5" y="849.5" width="14.2" height="7.2" fill="#c4a576"/>
<rect x="3234.5" y="842.2" width="14.2" height="7.2" fill="#f07b30"/>
<rect x="3253.8" y="914.8" width="14.2" height="7.2" fill="#4abe91"/>
<rect x="3253.8" y="878.5" width="14.2" height="36.2" fill="#7152d4"/>
<rect x="3253.8" y="813.2" width="14.2" height="65.2" fill="#c4a576"/>
<rect x="3253.8" y="798.8" width="14.2" height="14.5" fill="#1a6ef5"/>
<rect x="3253.8" y="791.5" width="14.2" height="7.2" fill="#f07b30"/>
<rect x="3273.1" y="914.8" width="14.2" height="7.2" fill="#4abe91"/>
<rect x="3273.1" y="871.2" width="14.2" height="43.5" fill="#7152d4"/>
<rect x="3273.1" y="835.0" width="14.2" height="36.2" fill="#c4a576"/>
<rect x="3273.1" y="820.5" width="14.2" height="14.5" fill="#1a6ef5"/>
<rect x="3292.4" y="914.8" width="14.2" height="7.2" fill="#4abe91"/>
<rect x="3292.4" y="878.5" width="14.2" height="36.2" fill="#7152d4"/>
<rect x="3292.4" y="842.2" width="14.2" height="36.2" fill="#c4a576"/>
<rect x="3292.4" y="835.0" width="14.2" height="7.2" fill="#1a6ef5"/>
<rect x="3292.4" y="827.8" width="14.2" height="7.2" fill="#f07b30"/>
<rect x="3311.7" y="885.8" width="14.2" height="36.2" fill="#4abe91"/>
<rect x="3311.7" y="545.0" width="14.2" height="340.8" fill="#7152d4"/>
<rect x="3311.7" y="407.2" width="14.2" height="137.8" fill="#c4a576"/>
<rect x="3311.7" y="385.5" width="14.2" height="21.8" fill="#1a6ef5"/>
<rect x="3311.7" y="342.0" width="14.2" height="43.5" fill="#f07b30"/>
<rect x="3330.9" y="885.8" width="14.2" height="36.2" fill="#7152d4"/>
<rect x="3330.9" y="878.5" width="14.2" height="7.2" fill="#c4a576"/>
<rect x="3330.9" y="871.2" width="14.2" height="7.2" fill="#1a6ef5"/>
<rect x="3330.9" y="864.0" width="14.2" height="7.2" fill="#f07b30"/>
<rect x="3350.2" y="885.8" width="14.2" height="36.2" fill="#7152d4"/>
<rect x="3350.2" y="864.0" width="14.2" height="21.8" fill="#c4a576"/>
<rect x="3350.2" y="849.5" width="14.2" height="14.5" fill="#f07b30"/>
<rect x="3369.5" y="864.0" width="14.2" height="58.0" fill="#7152d4"/>
<rect x="3369.5" y="813.2" width="14.2" height="50.8" fill="#c4a576"/>
<rect x="3369.5" y="806.0" width="14.2" height="7.2" fill="#1a6ef5"/>
<rect x="3369.5" y="798.8" width="14.2" height="7.2" fill="#f07b30"/>
<rect x="3388.8" y="864.0" width="14.2" height="58.0" fill="#7152d4"/>
<rect x="3388.8" y="777.0" width="14.2" height="87.0" fill="#c4a576"/>
<rect x="3388.8" y="769.8" width="14.2" height="7.2" fill="#1a6ef5"/>
<rect x="3408.1" y="893.0" width="14.2" height="29.0" fill="#4abe91"/>
<rect x="3408.1" y="769.8" width="14.2" height="123.2" fill="#7152d4"/>
<rect x="3408.1" y="690.0" width="14.2" height="79.8" fill="#c4a576"/>
<rect x="3408.1" y="668.2" width="14.2" height="21.8" fill="#1a6ef5"/>
<rect x="3427.4" y="791.5" width="14.2" height="130.5" fill="#7152d4"/>
<rect x="3427.4" y="755.2" width="14.2" height="36.2" fill="#c4a576"/>
<rect x="3427.4" y="740.8" width="14.2" height="14.5" fill="#1a6ef5"/>
<rect x="3446.7" y="762.5" width="14.2" height="159.5" fill="#7152d4"/>
<rect x="3446.7" y="639.2" width="14.2" height="123.2" fill="#c4a576"/>
<rect x="3446.7" y="610.2" width="14.2" height="29.0" fill="#1a6ef5"/>
<rect x="3446.7" y="603.0" width="14.2" height="7.2" fill="#f07b30"/>
<rect x="3466.0" y="914.8" width="14.2" height="7.2" fill="#4abe91"/>
<rect x="3466.0" y="842.2" width="14.2" height="72.5" fill="#7152d4"/>
<rect x="3466.0" y="806.0" width="14.2" height="36.2" fill="#c4a576"/>
<rect x="3466.0" y="798.8" width="14.2" height="7.2" fill="#1a6ef5"/>
<rect x="3466.0" y="791.5" width="14.2" height="7.2" fill="#f07b30"/>
<rect x="3485.3" y="871.2" width="14.2" height="50.8" fill="#7152d4"/>
<rect x="3485.3" y="813.2" width="14.2" height="58.0" fill="#c4a576"/>
<rect x="3504.6" y="914.8" width="14.2" height="7.2" fill="#4abe91"/>
<rect x="3504.6" y="878.5" width="14.2" height="36.2" fill="#7152d4"/>
<rect x="3504.6" y="842.2" width="14.2" height="36.2" fill="#c4a576"/>
<rect x="3523.8" y="914.8" width="14.2" height="7.2" fill="#7152d4"/>
<rect x="3523.8" y="878.5" width="14.2" height="36.2" fill="#c4a576"/>
<rect x="3543.1" y="907.5" width="14.2" height="14.5" fill="#4abe91"/>
<rect x="3543.1" y="704.5" width="14.2" height="203.0" fill="#7152d4"/>
<rect x="3543.1" y="581.2" width="14.2" height="123.2" fill="#c4a576"/>
<rect x="3543.1" y="566.8" width="14.2" height="14.5" fill="#1a6ef5"/>
<rect x="3543.1" y="559.5" width="14.2" height="7.2" fill="#f07b30"/>
<rect x="3562.4" y="900.2" width="14.2" height="21.8" fill="#7152d4"/>
<rect x="3562.4" y="885.8" width="14.2" height="14.5" fill="#c4a576"/>
<rect x="3581.7" y="885.8" width="14.2" height="36.2" fill="#7152d4"/>
<rect x="3581.7" y="842.2" width="14.2" height="43.5" fill="#c4a576"/>
<rect x="3601.0" y="914.8" width="14.2" height="7.2" fill="#4abe91"/>
<rect x="3601.0" y="878.5" width="14.2" height="36.2" fill="#7152d4"/>
<rect x="3601.0" y="864.0" width="14.2" height="14.5" fill="#c4a576"/>
<rect x="3620.3" y="864.0" width="14.2" height="58.0" fill="#7152d4"/>
<rect x="3639.6" y="914.8" width="14.2" height="7.2" fill="#4abe91"/>
<rect x="3639.6" y="893.0" width="14.2" height="21.8" fill="#7152d4"/>
<rect x="3639.6" y="871.2" width="14.2" height="21.8" fill="#c4a576"/>
<rect x="3658.9" y="907.5" width="14.2" height="14.5" fill="#4abe91"/>
<rect x="3658.9" y="893.0" width="14.2" height="14.5" fill="#7152d4"/>
<rect x="3658.9" y="878.5" width="14.2" height="14.5" fill="#c4a576"/>
<rect x="3658.9" y="871.2" width="14.2" height="7.2" fill="#f07b30"/>
<rect x="3678.2" y="893.0" width="14.2" height="29.0" fill="#7152d4"/>
<rect x="3678.2" y="871.2" width="14.2" height="21.8" fill="#c4a576"/>
<rect x="3697.5" y="893.0" width="14.2" height="29.0" fill="#7152d4"/>
<rect x="3697.5" y="878.5" width="14.2" height="14.5" fill="#c4a576"/>
<rect x="3716.8" y="893.0" width="14.2" height="29.0" fill="#7152d4"/>
<rect x="3716.8" y="885.8" width="14.2" height="7.2" fill="#c4a576"/>
<rect x="3716.8" y="878.5" width="14.2" height="7.2" fill="#1a6ef5"/>
<rect x="3736.0" y="907.5" width="14.2" height="14.5" fill="#7152d4"/>
<rect x="3736.0" y="893.0" width="14.2" height="14.5" fill="#c4a576"/>
<rect x="3736.0" y="885.8" width="14.2" height="7.2" fill="#f07b30"/>
<rect x="3755.3" y="914.8" width="14.2" height="7.2" fill="#4abe91"/>
<rect x="3755.3" y="885.8" width="14.2" height="29.0" fill="#7152d4"/>
<rect x="3755.3" y="864.0" width="14.2" height="21.8" fill="#c4a576"/>
</svg>
<div class="b" style="left:2738.0px;top:996.3px;width:24px;height:2.2px;background:#4abe91"></div>
<div class="t" style="left:2782.7px;top:984.9px;font-size:22px;line-height:22px;font-family:'Liberation Mono', monospace;color:#4abe91;font-weight:400;;-webkit-text-stroke:0.3px #4abe91">/aws/lambda/payment-processor</div>
<div class="b" style="left:3181.0px;top:996.3px;width:24px;height:2.2px;background:#7152d4"></div>
<div class="t" style="left:3225.7px;top:984.9px;font-size:22px;line-height:22px;font-family:'Liberation Mono', monospace;color:#7152d4;font-weight:400;;-webkit-text-stroke:0.3px #7152d4">/aws/ecs/api-gateway</div>
<div class="b" style="left:2738.0px;top:1031.2px;width:24px;height:2.2px;background:#c4a576"></div>
<div class="t" style="left:2782.7px;top:1019.8px;font-size:22px;line-height:22px;font-family:'Liberation Mono', monospace;color:#c4a576;font-weight:400;;-webkit-text-stroke:0.3px #c4a576">/aws/lambda/auth-service</div>
<div class="b" style="left:3115.0px;top:1031.2px;width:24px;height:2.2px;background:#1a6ef5"></div>
<div class="t" style="left:3159.7px;top:1019.8px;font-size:22px;line-height:22px;font-family:'Liberation Mono', monospace;color:#1a6ef5;font-weight:400;;-webkit-text-stroke:0.3px #1a6ef5">/application/background-jobs</div>
<div class="t" style="left:3543.4px;top:1019.8px;font-size:22px;line-height:22px;font-family:'Liberation Mono', monospace;color:#909296;font-weight:400;text-decoration:underline;text-underline-offset:4px;-webkit-text-stroke:0.3px #909296">+1 more</div>
<div class="b" style="left:3798px;top:1060px;width:5px;height:10px;background:#c8c9cc"></div>
<div class="b" style="left:3793px;top:1065px;width:10px;height:5px;background:#c8c9cc"></div>
<div class="t" style="left:513.4px;top:1123.2px;font-size:26px;line-height:26px;font-family:'Liberation Mono', monospace;color:#c9cacd;font-weight:400;;-webkit-text-stroke:0.3px #c9cacd">Error messages (severity 'ERROR' or 'FATAL')</div>
<div class="b" style="left:514.2px;top:1192.0px;width:3227.8px;height:49.8px;background:#141517;border-radius:0px;"></div>
<div class="t" style="left:519.1px;top:1207.0px;font-size:24px;line-height:24px;font-family:'Liberation Mono', monospace;color:#c1c2c5;font-weight:400;;-webkit-text-stroke:0.3px #c1c2c5">Message Count</div>
<svg class="i" style="left:711px;top:1206.5px;width:16px;height:17.5px" viewBox="0 0 16 17.5" fill="none" stroke="#c1c2c5" stroke-width="1.7" stroke-linecap="round" stroke-linejoin="round"><path d="M8 1v15.5M1.5 10l6.5 6.5L14.5 10"/></svg>
<div class="b" style="left:1571px;top:1208px;width:4px;height:4px;border-radius:50%;background:#9a9ca0"></div>
<div class="b" style="left:1571px;top:1215px;width:4px;height:4px;border-radius:50%;background:#9a9ca0"></div>
<div class="b" style="left:1571px;top:1222px;width:4px;height:4px;border-radius:50%;background:#9a9ca0"></div>
<div class="b" style="left:1577.5px;top:1208px;width:4px;height:4px;border-radius:50%;background:#9a9ca0"></div>
<div class="b" style="left:1577.5px;top:1215px;width:4px;height:4px;border-radius:50%;background:#9a9ca0"></div>
<div class="b" style="left:1577.5px;top:1222px;width:4px;height:4px;border-radius:50%;background:#9a9ca0"></div>
<div class="t" style="left:1595.8px;top:1206.8px;font-size:24px;line-height:24px;font-family:'Liberation Mono', monospace;color:#c1c2c5;font-weight:400;;-webkit-text-stroke:0.3px #c1c2c5">Body</div>
<svg class="i" style="left:3674.0px;top:1206.5px;width:22.2px;height:19.5px;color:#909296;" viewBox="3.2 5.2 18.6 16" preserveAspectRatio="none" fill="none" stroke="currentColor" stroke-width="1.5" stroke-linecap="round" stroke-linejoin="round"><path d="M4 6h16"/><path d="M4 18h5"/><path d="M4 12h13a3 3 0 0 1 0 6h-4l2-2m0 4l-2-2"/></svg>
<svg class="i" style="left:3716.0px;top:1205.7px;width:24.0px;height:20.3px;color:#909296;" viewBox="3.2 3.2 17.6 18.6" preserveAspectRatio="none" fill="none" stroke="currentColor" stroke-width="1.5" stroke-linecap="round" stroke-linejoin="round"><path d="M4 17v2a2 2 0 0 0 2 2h12a2 2 0 0 0 2-2v-2"/><path d="M7 11l5 5 5-5"/><path d="M12 4v12"/></svg>
<div class="b" style="left:3742.0px;top:1192.0px;width:30.0px;height:602.0px;background:#262729;border-radius:0px;border-left:2px solid #38393c;border-right:2px solid #38393c;box-sizing:border-box"></div>
<div class="b" style="left:3750.0px;top:1194.0px;width:16.0px;height:36.0px;background:#5f6064;border-radius:8px;"></div>
<div class="b" style="left:0;top:0;width:3812px;height:1794px;overflow:hidden">
<div class="t" style="left:515.8px;top:1261.1px;font-size:24px;line-height:24px;font-family:'Liberation Mono', monospace;color:#96989c;font-weight:400;;-webkit-text-stroke:0.3px #96989c">69</div>
<div class="t" style="left:1591.6px;top:1261.1px;font-size:24px;line-height:24px;font-family:'Liberation Mono', monospace;color:#96989c;font-weight:400;;-webkit-text-stroke:0.3px #96989c">Upstream service timeout: inventory-service did not respond within 5s</div>
<div class="t" style="left:515.8px;top:1318.3px;font-size:24px;line-height:24px;font-family:'Liberation Mono', monospace;color:#96989c;font-weight:400;;-webkit-text-stroke:0.3px #96989c">62</div>
<div class="t" style="left:1591.6px;top:1318.3px;font-size:24px;line-height:24px;font-family:'Liberation Mono', monospace;color:#96989c;font-weight:400;;-webkit-text-stroke:0.3px #96989c">Login failed for user admin, invalid password</div>
<div class="t" style="left:515.8px;top:1375.5px;font-size:24px;line-height:24px;font-family:'Liberation Mono', monospace;color:#96989c;font-weight:400;;-webkit-text-stroke:0.3px #96989c">62</div>
<div class="t" style="left:1591.6px;top:1375.5px;font-size:24px;line-height:24px;font-family:'Liberation Mono', monospace;color:#96989c;font-weight:400;;-webkit-text-stroke:0.3px #96989c">Login failed for user test@test.com, invalid password</div>
<div class="t" style="left:515.8px;top:1432.7px;font-size:24px;line-height:24px;font-family:'Liberation Mono', monospace;color:#96989c;font-weight:400;;-webkit-text-stroke:0.3px #96989c">62</div>
<div class="t" style="left:1591.6px;top:1432.7px;font-size:24px;line-height:24px;font-family:'Liberation Mono', monospace;color:#96989c;font-weight:400;;-webkit-text-stroke:0.3px #96989c">Upstream service timeout: product-service did not respond within 5s</div>
<div class="t" style="left:515.8px;top:1489.9px;font-size:24px;line-height:24px;font-family:'Liberation Mono', monospace;color:#96989c;font-weight:400;;-webkit-text-stroke:0.3px #96989c">58</div>
<div class="t" style="left:1591.6px;top:1489.9px;font-size:24px;line-height:24px;font-family:'Liberation Mono', monospace;color:#96989c;font-weight:400;;-webkit-text-stroke:0.3px #96989c">Login failed for user attacker1, invalid password</div>
<div class="t" style="left:515.8px;top:1547.1px;font-size:24px;line-height:24px;font-family:'Liberation Mono', monospace;color:#96989c;font-weight:400;;-webkit-text-stroke:0.3px #96989c">57</div>
<div class="t" style="left:1591.6px;top:1547.1px;font-size:24px;line-height:24px;font-family:'Liberation Mono', monospace;color:#96989c;font-weight:400;;-webkit-text-stroke:0.3px #96989c">Upstream service timeout: user-service did not respond within 5s</div>
<div class="t" style="left:515.8px;top:1604.3px;font-size:24px;line-height:24px;font-family:'Liberation Mono', monospace;color:#96989c;font-weight:400;;-webkit-text-stroke:0.3px #96989c">53</div>
<div class="t" style="left:1591.6px;top:1604.3px;font-size:24px;line-height:24px;font-family:'Liberation Mono', monospace;color:#96989c;font-weight:400;;-webkit-text-stroke:0.3px #96989c">Login failed for user root, invalid password</div>
<div class="t" style="left:515.8px;top:1661.5px;font-size:24px;line-height:24px;font-family:'Liberation Mono', monospace;color:#96989c;font-weight:400;;-webkit-text-stroke:0.3px #96989c">16</div>
<div class="t" style="left:1591.6px;top:1661.5px;font-size:24px;line-height:24px;font-family:'Liberation Mono', monospace;color:#96989c;font-weight:400;;-webkit-text-stroke:0.3px #96989c">Connection timeout after 30s to payment-gateway.prod.internal:443</div>
<div class="t" style="left:515.8px;top:1718.7px;font-size:24px;line-height:24px;font-family:'Liberation Mono', monospace;color:#96989c;font-weight:400;;-webkit-text-stroke:0.3px #96989c">15</div>
<div class="t" style="left:1591.6px;top:1718.7px;font-size:24px;line-height:24px;font-family:'Liberation Mono', monospace;color:#96989c;font-weight:400;;-webkit-text-stroke:0.3px #96989c">Job failed with error: External API unavailable, will retry</div>
<div class="t" style="left:515.8px;top:1775.9px;font-size:24px;line-height:24px;font-family:'Liberation Mono', monospace;color:#96989c;font-weight:400;;-webkit-text-stroke:0.3px #96989c">11</div>
<div class="t" style="left:1591.6px;top:1775.9px;font-size:24px;line-height:24px;font-family:'Liberation Mono', monospace;color:#96989c;font-weight:400;;-webkit-text-stroke:0.3px #96989c">Job failed with error: Database connection lost, will retry</div>
</div>
<div class="b" style="left:3797px;top:1816px;width:5px;height:10px;background:#c8c9cc"></div>
<div class="b" style="left:3792px;top:1821px;width:10px;height:5px;background:#c8c9cc"></div>
</body></html>
